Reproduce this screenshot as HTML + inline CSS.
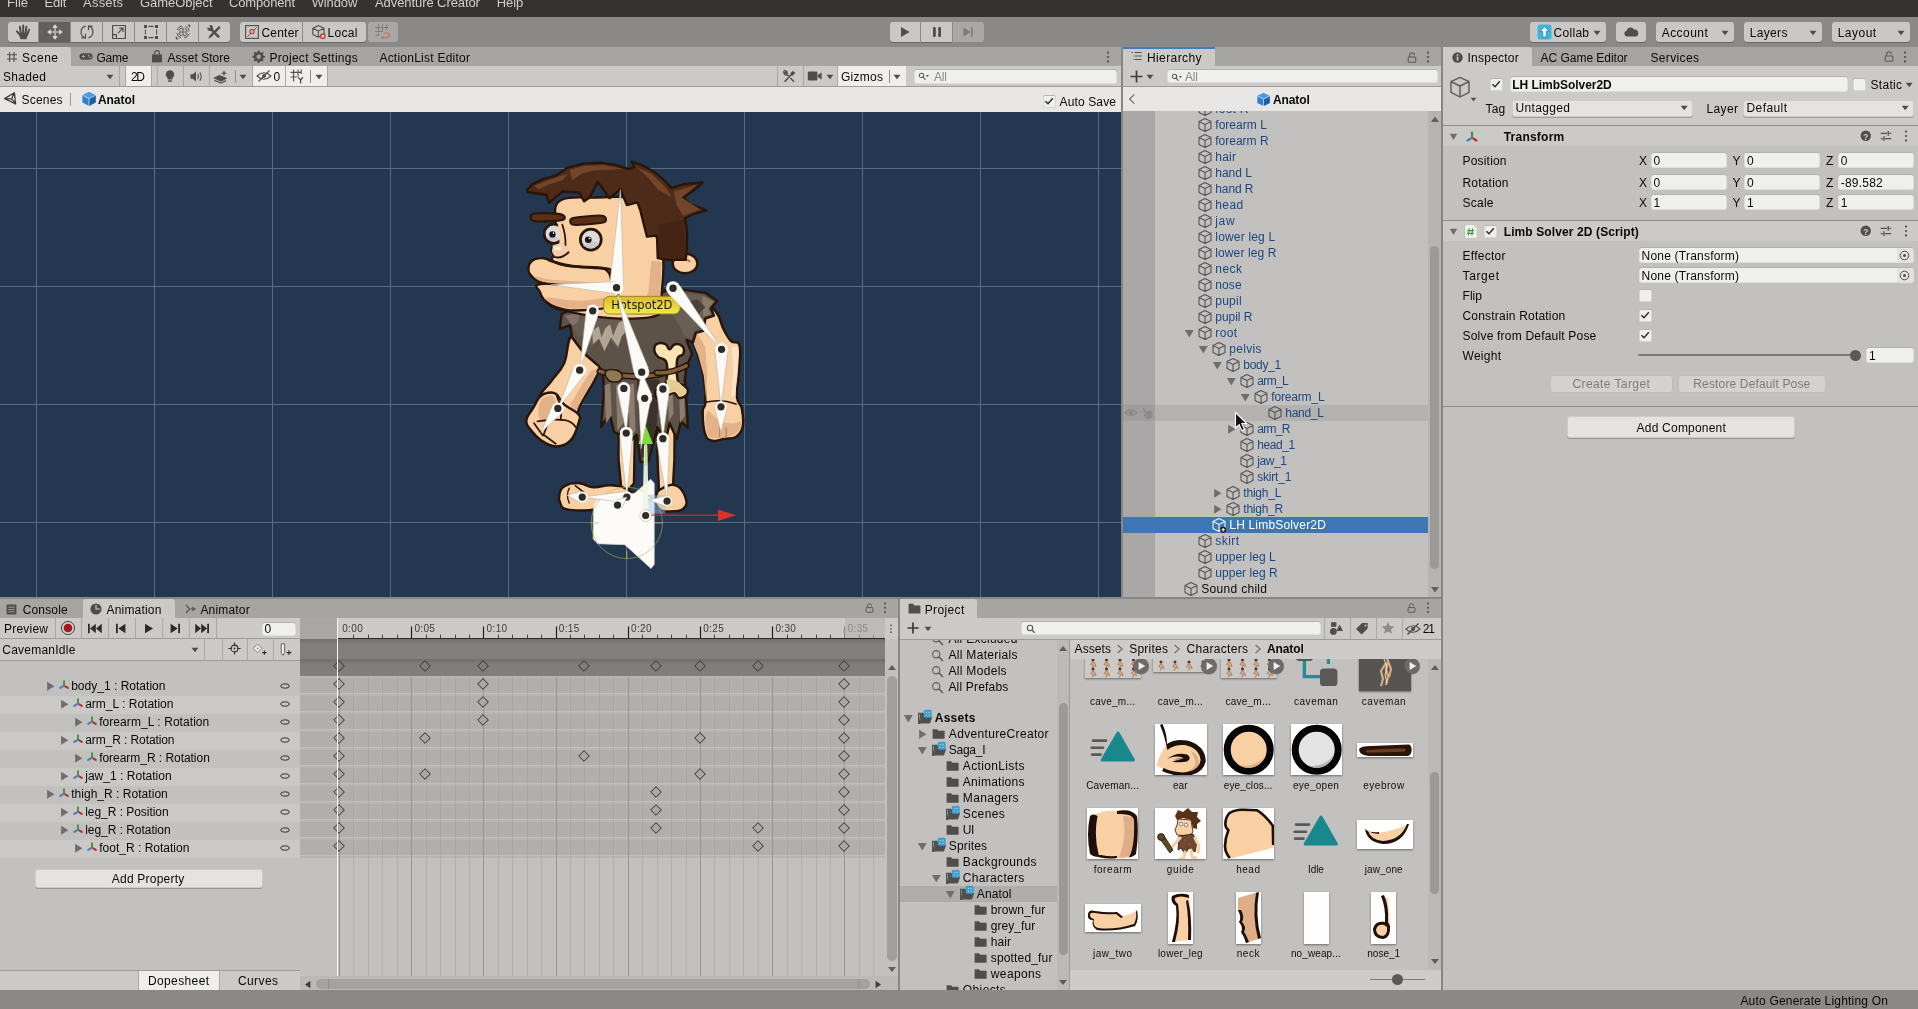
<!DOCTYPE html>
<html><head><meta charset="utf-8"><title>Unity - Anatol</title>
<style>
html,body{margin:0;padding:0}
body{width:1918px;height:1009px;overflow:hidden;position:relative;background:#878684;font-family:"Liberation Sans",sans-serif;font-size:12px;color:#090909}
div,span,svg{position:absolute;box-sizing:border-box}
.t{white-space:nowrap;line-height:16px;height:16px}
.btn{background:#c9c8c6;border-radius:3px}
.fld{background:#efefed;border-radius:3px;box-shadow:inset 0 0 0 1px rgba(0,0,0,0.07), inset 0 1px 0 0 rgba(0,0,0,0.2)}
.pbtn{background:#e4e3e1;border-radius:3px;box-shadow:inset 0 0 0 1px rgba(0,0,0,0.1), 0 1px 0 rgba(0,0,0,0.22)}
.cb{background:#efefed;border-radius:2px;box-shadow:inset 0 0 0 1px rgba(0,0,0,0.1), inset 0 1px 0 rgba(0,0,0,0.15)}
.clip{overflow:hidden}
</style></head><body>
<div id="root" style="left:0;top:0;width:1918px;height:1009px;will-change:transform">
<svg width="0" height="0" style="left:0;top:0"><defs>
<symbol id="cube" viewBox="0 0 16 16"><path d="M8 1.6 L14 4.6 V11.4 L8 14.4 L2 11.4 V4.6 Z M2 4.6 L8 7.6 L14 4.6 M8 7.6 V14.4" fill="none" stroke="#555452" stroke-width="1.1" stroke-linejoin="round"/></symbol>
<symbol id="pcube" viewBox="0 0 16 16"><path d="M8 1 L14.6 4.2 V11.6 L8 15 L1.4 11.6 V4.2 Z" fill="#2f7fd0"/><path d="M8 1 L14.6 4.2 L8 7.6 L1.4 4.2 Z" fill="#4a9be8"/><path d="M8 7.6 L14.6 4.2 V11.6 L8 15 Z" fill="#1d5fa8"/><path d="M1.4 4.2 L8 7.6 L14.6 4.2 M8 7.6 V15" fill="none" stroke="#e8f1fb" stroke-width="0.7"/></symbol>
<symbol id="fold" viewBox="0 0 16 16"><path d="M1.6 3.2 H6 L7.4 4.8 H13.6 V12.8 H1.6 Z" fill="#4f4e4c"/></symbol>
<symbol id="foldb" viewBox="0 0 16 16"><path d="M1.5 4 H5.5 L6.8 5.4 H11 V7 H4.5 L2.6 12.2 V5 H1.5Z M1.5 4 V13.5 H11.8 L13.8 7.6 H4.8 L2.8 13" fill="#4f4e4c"/><path d="M1.5 4 H5.6 L6.9 5.4 H11.5 V7.4 H4.6 L2.6 13.5 H1.5 Z" fill="none" stroke="#4f4e4c" stroke-width="1"/><path d="M3 13.5 L4.9 7.8 H14.2 L12.2 13.5 Z" fill="#4f4e4c"/><rect x="6.4" y="0.8" width="7.4" height="7.4" rx="1.4" fill="#3c9fcf"/><circle cx="8.8" cy="3.2" r="0.55" fill="#bfe4f5"/><circle cx="11.4" cy="3.2" r="0.55" fill="#bfe4f5"/><circle cx="8.8" cy="5.8" r="0.55" fill="#bfe4f5"/><circle cx="11.4" cy="5.8" r="0.55" fill="#bfe4f5"/></symbol>
<symbol id="td" viewBox="0 0 10 10"><path d="M0.8 2 H9.2 L5 9 Z" fill="#6f6e6c"/></symbol>
<symbol id="tr" viewBox="0 0 10 10"><path d="M2 0.8 V9.2 L9 5 Z" fill="#6f6e6c"/></symbol>
<symbol id="dd" viewBox="0 0 8 6"><path d="M0.5 0.8 H7.5 L4 5.2 Z" fill="#4f4e4c"/></symbol>
<symbol id="xf" viewBox="0 0 14 14"><path d="M7 6.6 V2.6" stroke="#3f9a3a" stroke-width="2.3" stroke-linecap="round"/><path d="M5.6 8.6 L2.6 10.4" stroke="#3c7fd0" stroke-width="2.3" stroke-linecap="round"/><path d="M8.4 8.6 L11.4 10.4" stroke="#c22a22" stroke-width="2.3" stroke-linecap="round"/><circle cx="7" cy="7.8" r="1" fill="#6a6968"/></symbol>
<symbol id="srch" viewBox="0 0 14 14"><circle cx="5.6" cy="5.6" r="3.9" fill="none" stroke="#5c5b59" stroke-width="1.2"/><path d="M8.6 8.6 L12.4 12.4" stroke="#5c5b59" stroke-width="1.7" stroke-linecap="round"/></symbol>
<symbol id="ssrch" viewBox="0 0 14 10"><circle cx="4" cy="4" r="2.6" fill="none" stroke="#5c5b59" stroke-width="1.2"/><path d="M6 6 L8.4 8.6" stroke="#5c5b59" stroke-width="1.4" stroke-linecap="round"/><path d="M9 3.6 H13 L11 6 Z" fill="#5c5b59"/></symbol>
<symbol id="lock" viewBox="0 0 10 11"><path d="M2.6 5 V3.2 A2.4 2.4 0 0 1 7.4 3.2" fill="none" stroke="#5c5b59" stroke-width="1.1"/><rect x="1.2" y="5" width="7.6" height="5.2" rx="0.8" fill="none" stroke="#5c5b59" stroke-width="1.1"/></symbol>
<symbol id="keb" viewBox="0 0 4 12"><circle cx="2" cy="1.6" r="1.1" fill="#4f4e4c"/><circle cx="2" cy="6" r="1.1" fill="#4f4e4c"/><circle cx="2" cy="10.4" r="1.1" fill="#4f4e4c"/></symbol>
<symbol id="chk" viewBox="0 0 12 12"><path d="M2.4 6.2 L5 8.8 L9.8 3.2" fill="none" stroke="#2b2a29" stroke-width="1.4"/></symbol>
<symbol id="key" viewBox="0 0 12 12"><path d="M6 0.7 L11.3 6 L6 11.3 L0.7 6 Z" fill="#a9a8a6" stroke="#2e2d2c" stroke-width="1"/></symbol>
<symbol id="keyd" viewBox="0 0 12 12"><path d="M6 0.7 L11.3 6 L6 11.3 L0.7 6 Z" fill="#7e7d7b" stroke="#2e2d2c" stroke-width="0.9"/></symbol>
<symbol id="oval" viewBox="0 0 10 6"><ellipse cx="5" cy="3" rx="4.2" ry="2.1" fill="none" stroke="#2f2e2d" stroke-width="1"/></symbol>
<symbol id="help" viewBox="0 0 12 12"><circle cx="6" cy="6" r="5.4" fill="#4f4e4c"/></symbol>
<symbol id="preset" viewBox="0 0 12 12"><path d="M0.8 3.4 H7 M9.4 3.4 H11.2 M0.8 8.6 H2.8 M5.2 8.6 H11.2 M8.2 1 V5.8 M4 6.2 V11" stroke="#4f4e4c" stroke-width="1.3" fill="none"/></symbol>
</defs></svg>
<div style="left:0px;top:0px;width:1918px;height:17px;background:#353331;"></div>
<span class="t" style="top:-5px;left:6.9px;font-size:13px;color:#cfcecc;letter-spacing:0.08px;">File</span>
<span class="t" style="top:-5px;left:44.4px;font-size:13px;color:#cfcecc;letter-spacing:-0.17px;">Edit</span>
<span class="t" style="top:-5px;left:83.1px;font-size:13px;color:#cfcecc;letter-spacing:0.2px;">Assets</span>
<span class="t" style="top:-5px;left:140px;font-size:13px;color:#cfcecc;letter-spacing:-0.05px;">GameObject</span>
<span class="t" style="top:-5px;left:229px;font-size:13px;color:#cfcecc;letter-spacing:-0.15px;">Component</span>
<span class="t" style="top:-5px;left:311.7px;font-size:13px;color:#cfcecc;letter-spacing:-0.13px;">Window</span>
<span class="t" style="top:-5px;left:375px;font-size:13px;color:#cfcecc;letter-spacing:-0.08px;">Adventure Creator</span>
<span class="t" style="top:-5px;left:496.7px;font-size:13px;color:#cfcecc;letter-spacing:-0.05px;">Help</span>
<div style="left:0px;top:17px;width:1918px;height:30px;background:#8a8987;"></div>
<div style="left:8px;top:22px;width:30px;height:20px;background:#c9c8c6;border-radius:3px 0 0 3px;box-shadow:0 1px 0 #6a6967;"></div>
<div style="left:39px;top:22px;width:31px;height:20px;background:#62615f;border-radius:0;box-shadow:0 1px 0 #6a6967;"></div>
<div style="left:71px;top:22px;width:31px;height:20px;background:#c9c8c6;border-radius:0;box-shadow:0 1px 0 #6a6967;"></div>
<div style="left:103px;top:22px;width:31px;height:20px;background:#c9c8c6;border-radius:0;box-shadow:0 1px 0 #6a6967;"></div>
<div style="left:135px;top:22px;width:31px;height:20px;background:#c9c8c6;border-radius:0;box-shadow:0 1px 0 #6a6967;"></div>
<div style="left:167px;top:22px;width:31px;height:20px;background:#c9c8c6;border-radius:0;box-shadow:0 1px 0 #6a6967;"></div>
<div style="left:199px;top:22px;width:31px;height:20px;background:#c9c8c6;border-radius:0 3px 3px 0;box-shadow:0 1px 0 #6a6967;"></div>
<svg style="left:15px;top:24px;" width="16" height="16" viewBox="0 0 16 16"><g stroke="#4f4e4c" stroke-width="2" stroke-linecap="round" fill="none"><path d="M5.9 10 L4.9 2.8"/><path d="M8.2 10 V1.6"/><path d="M10.4 10 L11.4 2.8"/><path d="M12.2 10.6 L14 5.8"/><path d="M5.6 11.6 L1.9 7.4"/></g><path d="M4.6 8.4 H12.9 L12.7 11 L11.5 15.2 H5.6 L4.2 11.6 Z" fill="#4f4e4c"/></svg>
<svg style="left:46.5px;top:24px;" width="16" height="16" viewBox="0 0 16 16"><path d="M8 2.6 V13.4 M2.6 8 H13.4" stroke="#b9b8b6" stroke-width="1.7"/><path d="M8 0.2 L10.8 3.8 H5.2 Z M8 15.8 L10.8 12.2 H5.2 Z M0.2 8 L3.8 5.2 V10.8 Z M15.8 8 L12.2 5.2 V10.8 Z" fill="#dddcda"/></svg>
<svg style="left:78.5px;top:24px;" width="16" height="16" viewBox="0 0 16 16"><path d="M6.4 13.8 A6 6 0 0 1 6.6 2.2 M9.6 2.2 A6 6 0 0 1 9.4 13.8" fill="none" stroke="#4f4e4c" stroke-width="1.2"/><path d="M2.4 13.9 H6.5 V9.8 M13.6 2.1 H9.5 V6.2" fill="none" stroke="#4f4e4c" stroke-width="1.2"/></svg>
<svg style="left:110.5px;top:24px;" width="16" height="16" viewBox="0 0 16 16"><path d="M1.6 1.5 H14.4 V14.5 H1.6 Z" fill="none" stroke="#4f4e4c" stroke-width="1.2"/><path d="M1.6 10.6 H5.4 V14.5" fill="none" stroke="#4f4e4c" stroke-width="1.1"/><path d="M7 9.2 L11.8 4.4 M8.2 4.2 H12 V8" fill="none" stroke="#4f4e4c" stroke-width="1.2"/></svg>
<svg style="left:142.5px;top:24px;" width="16" height="16" viewBox="0 0 16 16"><path d="M5.4 2.4 H10.6 M5.4 13.6 H10.6 M2.4 5.4 V10.6 M13.6 5.4 V10.6" fill="none" stroke="#4f4e4c" stroke-width="1.1"/><g fill="#4f4e4c"><rect x="1" y="1" width="3" height="3"/><rect x="12" y="1" width="3" height="3"/><rect x="1" y="12" width="3" height="3"/><rect x="12" y="12" width="3" height="3"/></g></svg>
<svg style="left:174.5px;top:24px;" width="16" height="16" viewBox="0 0 16 16"><circle cx="8" cy="8" r="6.2" fill="none" stroke="#4f4e4c" stroke-width="1" stroke-dasharray="6.3 3.44" stroke-dashoffset="-1.72"/><circle cx="8" cy="8" r="4.2" fill="none" stroke="#4f4e4c" stroke-width="1" stroke-dasharray="4.2 2.4" stroke-dashoffset="-1.2"/><path d="M8 3.6 L9.4 5.5 H8.55 V7.45 H10.5 V6.6 L12.4 8 L10.5 9.4 V8.55 H8.55 V10.5 H9.4 L8 12.4 L6.6 10.5 H7.45 V8.55 H5.5 V9.4 L3.6 8 L5.5 6.6 V7.45 H7.45 V5.5 H6.6 Z" fill="#6d6c6a"/><path d="M12.2 0.8 H15.2 V3.8 Z M0.8 12.2 V15.2 H3.8 Z" fill="#4f4e4c"/></svg>
<svg style="left:206px;top:24px;" width="16" height="16" viewBox="0 0 16 16"><path d="M12.9 1.9 L14.7 3.7 L5.2 13.2 L2.2 14.6 L3.5 11.5 Z" fill="#4f4e4c"/><path d="M4.8 4.8 L13.2 13.4" stroke="#4f4e4c" stroke-width="2.5"/><circle cx="4.2" cy="4" r="2.9" fill="#4f4e4c"/><path d="M4.2 4 L0.6 3.2 L3.4 0.2 Z" fill="#c9c8c6"/><path d="M5.2 13.2 L12.9 5.5" stroke="#c9c8c6" stroke-width="0.01"/></svg>
<div style="left:240px;top:22px;width:62px;height:20px;background:#c9c8c6;border-radius:3px 0 0 3px;box-shadow:0 1px 0 #6a6967;"></div>
<div style="left:303px;top:22px;width:63px;height:20px;background:#c9c8c6;border-radius:0 3px 3px 0;box-shadow:0 1px 0 #6a6967;"></div>
<svg style="left:245px;top:25px;" width="14" height="14" viewBox="0 0 14 14"><rect x="0.6" y="0.6" width="12.8" height="12.8" fill="none" stroke="#4f4e4c" stroke-width="1.1"/><path d="M2.6 11.6 L11.6 2.4" stroke="#4f4e4c" stroke-width="0.9"/><circle cx="7" cy="6.6" r="2.1" fill="#d9b8b4" stroke="#c2352b" stroke-width="1.1"/></svg>
<span class="t" style="top:25px;left:261.5px;letter-spacing:0.2px;">Center</span>
<svg style="left:311px;top:24px;" width="16" height="16" viewBox="0 0 16 16"><path d="M7.4 1.4 L13 4.2 V10.4 L7.4 13.2 L1.8 10.4 V4.2 Z M1.8 4.2 L7.4 7 L13 4.2 M7.4 7 V13.2" fill="none" stroke="#4f4e4c" stroke-width="1.1" stroke-linejoin="round"/><circle cx="11.8" cy="12.2" r="2.3" fill="#dcbab6" stroke="#c2352b" stroke-width="1.1"/></svg>
<span class="t" style="top:25px;left:327.5px;letter-spacing:0.33px;">Local</span>
<div style="left:368px;top:22px;width:30px;height:20px;background:#a9a8a6;border-radius:3px;"></div>
<svg style="left:375px;top:24px;" width="16" height="16" viewBox="0 0 16 16"><path d="M3.5 0.5 V12 M7.5 0.5 V7.5 M11.5 0.5 V5.5 M0.5 3.5 H13 M0.5 7.5 H7.5 M0.5 11.5 H4" fill="none" stroke="#757472" stroke-width="1.1" stroke-dasharray="2 0.9"/><path d="M9 9 H12 A2.3 2.3 0 0 1 12 13.6 H9" fill="none" stroke="#c77a72" stroke-width="1.7"/><rect x="6.6" y="12.4" width="2" height="2" fill="#7b7a78"/></svg>
<div style="left:890px;top:22px;width:30px;height:20px;background:#c9c8c6;border-radius:3px 0 0 3px;box-shadow:0 1px 0 #6a6967;"></div>
<div style="left:921px;top:22px;width:31px;height:20px;background:#c9c8c6;box-shadow:0 1px 0 #6a6967;"></div>
<div style="left:953px;top:22px;width:31px;height:20px;background:#a9a8a6;border-radius:0 3px 3px 0;"></div>
<svg style="left:899px;top:26px;" width="12" height="12" viewBox="0 0 12 12"><path d="M2 1 V11 L10.6 6 Z" fill="#4f4e4c"/></svg>
<svg style="left:931px;top:26px;" width="12" height="12" viewBox="0 0 12 12"><rect x="2" y="1" width="2.8" height="10" rx="1" fill="#4f4e4c"/><rect x="7.2" y="1" width="2.8" height="10" rx="1" fill="#4f4e4c"/></svg>
<svg style="left:962px;top:26px;" width="12" height="12" viewBox="0 0 12 12"><path d="M1.4 1.2 V10.8 L8.4 6 Z" fill="#7c7b79"/><rect x="9" y="1.2" width="1.6" height="9.6" fill="#7c7b79"/></svg>
<div style="left:1530px;top:22px;width:76px;height:20px;background:#c9c8c6;border-radius:3px;box-shadow:0 1px 0 #6a6967;"></div>
<svg style="left:1537px;top:24px;" width="15" height="16" viewBox="0 0 15 16"><rect x="0.5" y="0.5" width="14" height="15" rx="2.5" fill="#3fb6da"/><path d="M7.5 2.6 L12 7.4 H9.3 V13 H5.7 V7.4 H3 Z" fill="#f4fbfd" stroke="#1d6f9e" stroke-width="0.7"/></svg>
<span class="t" style="top:25px;left:1553.6px;letter-spacing:0.28px;">Collab</span>
<svg style="left:1593px;top:29.5px;" width="8" height="6"><use href="#dd"/></svg>
<div style="left:1616px;top:22px;width:30px;height:20px;background:#c9c8c6;border-radius:3px;box-shadow:0 1px 0 #6a6967;"></div>
<svg style="left:1623px;top:26px;" width="16" height="12" viewBox="0 0 16 12"><path d="M4 10.6 A3 3 0 0 1 3.6 4.7 A4 4 0 0 1 11 3.6 A3.5 3.5 0 0 1 12.4 10.6 Z" fill="#4f4e4c"/></svg>
<div style="left:1656px;top:22px;width:78px;height:20px;background:#c9c8c6;border-radius:3px;box-shadow:0 1px 0 #6a6967;"></div>
<span class="t" style="top:25px;left:1661.7px;letter-spacing:0.46px;">Account</span>
<svg style="left:1721px;top:29.5px;" width="8" height="6"><use href="#dd"/></svg>
<div style="left:1744px;top:22px;width:78px;height:20px;background:#c9c8c6;border-radius:3px;box-shadow:0 1px 0 #6a6967;"></div>
<span class="t" style="top:25px;left:1749.7px;letter-spacing:0.34px;">Layers</span>
<svg style="left:1809px;top:29.5px;" width="8" height="6"><use href="#dd"/></svg>
<div style="left:1832px;top:22px;width:78px;height:20px;background:#c9c8c6;border-radius:3px;box-shadow:0 1px 0 #6a6967;"></div>
<span class="t" style="top:25px;left:1837.7px;letter-spacing:0.49px;">Layout</span>
<svg style="left:1897px;top:29.5px;" width="8" height="6"><use href="#dd"/></svg>
<div style="left:0px;top:47px;width:1121px;height:19px;background:#a6a5a2;"></div>
<div style="left:0px;top:47px;width:70.5px;height:19px;background:#cbcac7;border-radius:0 3px 0 0;"></div>
<svg style="left:6px;top:50.5px;" width="12" height="12" viewBox="0 0 12 12"><path d="M3.6 1 V11 M8 1 V11 M1 3.8 H11 M1 8 H11" stroke="#4f4e4c" stroke-width="1.1" fill="none"/></svg>
<span class="t" style="top:50px;left:22px;letter-spacing:0.49px;">Scene</span>
<svg style="left:79px;top:52px;" width="14" height="9" viewBox="0 0 14 9"><rect x="0.5" y="1.2" width="13" height="6.6" rx="3.3" fill="#4f4e4c"/><path d="M3 4.5 H6 M4.5 3 V6" stroke="#a6a5a2" stroke-width="0.9"/><circle cx="9.6" cy="3.6" r="0.8" fill="#a6a5a2"/><circle cx="11" cy="5.4" r="0.8" fill="#a6a5a2"/></svg>
<span class="t" style="top:50px;left:96.5px;letter-spacing:-0.23px;">Game</span>
<svg style="left:151px;top:50px;" width="12" height="13" viewBox="0 0 12 13"><path d="M1 4.4 H11 V12.4 H1 Z" fill="#4f4e4c"/><path d="M3.6 4.4 V3 A2.4 2.4 0 0 1 8.4 3 V4.4" fill="none" stroke="#4f4e4c" stroke-width="1.1"/></svg>
<span class="t" style="top:50px;left:167.5px;letter-spacing:0.05px;">Asset Store</span>
<svg style="left:252px;top:50px;" width="13" height="13" viewBox="0 0 13 13"><path d="M6.5 0.6 L7.6 0.6 L8 2.2 L9.4 2.8 L10.8 1.9 L11.8 2.9 L10.9 4.3 L11.5 5.7 L13 6 V7.4 L11.5 7.8 L10.9 9.2 L11.7 10.6 L10.7 11.6 L9.3 10.8 L7.9 11.4 L7.5 13 H5.9 L5.5 11.4 L4.1 10.8 L2.7 11.6 L1.7 10.6 L2.5 9.2 L1.9 7.8 L0.4 7.4 V6 L1.9 5.6 L2.5 4.2 L1.7 2.8 L2.7 1.8 L4.1 2.6 L5.5 2.1 L5.9 0.6 Z" fill="#4f4e4c"/><circle cx="6.7" cy="6.7" r="2.2" fill="#a6a5a2"/></svg>
<span class="t" style="top:50px;left:269.4px;letter-spacing:0.29px;">Project Settings</span>
<span class="t" style="top:50px;left:379.4px;letter-spacing:0.24px;">ActionList Editor</span>
<svg style="left:1105.5px;top:51px;" width="4" height="12"><use href="#keb"/></svg>
<div style="left:0px;top:66px;width:1121px;height:21px;background:#cbcac7;"></div>
<div style="left:0px;top:86px;width:1121px;height:1px;background:#9d9c9a;"></div>
<span class="t" style="top:69px;left:3px;letter-spacing:0.33px;">Shaded</span>
<svg style="left:106px;top:74px;" width="8" height="6"><use href="#dd"/></svg>
<div style="left:118.5px;top:66px;width:1px;height:20px;background:#a9a8a6;"></div>
<div style="left:125px;top:66px;width:1px;height:20px;background:#a9a8a6;"></div>
<div style="left:126px;top:66px;width:25px;height:20px;background:#efeeec;"></div>
<span class="t" style="top:69px;left:131px;letter-spacing:-1.34px;font-weight:normal;">2D</span>
<div style="left:151px;top:66px;width:1px;height:20px;background:#a9a8a6;"></div>
<div style="left:157px;top:66px;width:1px;height:20px;background:#a9a8a6;"></div>
<div style="left:183px;top:66px;width:1px;height:20px;background:#a9a8a6;"></div>
<div style="left:209px;top:66px;width:1px;height:20px;background:#a9a8a6;"></div>
<div style="left:251.5px;top:66px;width:1px;height:20px;background:#a9a8a6;"></div>
<div style="left:285px;top:66px;width:1px;height:20px;background:#a9a8a6;"></div>
<div style="left:327px;top:66px;width:1px;height:20px;background:#a9a8a6;"></div>
<svg style="left:163px;top:69px;" width="14" height="15" viewBox="0 0 14 15"><path d="M7 1.2 A4.2 4.2 0 0 1 9.4 8.8 V10.4 H4.6 V8.8 A4.2 4.2 0 0 1 7 1.2 Z" fill="#4f4e4c"/><rect x="5" y="11.2" width="4" height="1.6" rx="0.6" fill="#4f4e4c"/></svg>
<svg style="left:189px;top:69px;" width="15" height="15" viewBox="0 0 15 15"><path d="M1.5 5.2 H3.8 L7 2.4 V12.6 L3.8 9.8 H1.5 Z" fill="#4f4e4c"/><path d="M8.8 4.8 Q10.4 7.5 8.8 10.2 M10.8 3.2 Q13.4 7.5 10.8 11.8" fill="none" stroke="#4f4e4c" stroke-width="1.1"/></svg>
<svg style="left:213px;top:69px;" width="16" height="15" viewBox="0 0 16 15"><path d="M1.5 9 L6.5 6.6 L13 9.4 L8 12 Z M1.5 11.4 L8 14.2 L13 11.6" fill="none" stroke="#4f4e4c" stroke-width="1.2"/><path d="M1.5 9 L6.5 6.6 L13 9.4 L8 12 Z" fill="#4f4e4c"/><path d="M11 1 L11.8 3.4 L14.2 4.2 L11.8 5 L11 7.4 L10.2 5 L7.8 4.2 L10.2 3.4 Z" fill="#4f4e4c"/></svg>
<div style="left:234.5px;top:70px;width:1px;height:13px;background:#8f8e8c;"></div>
<svg style="left:239px;top:74px;" width="8" height="6"><use href="#dd"/></svg>
<div style="left:252.5px;top:66px;width:32.5px;height:20px;background:#efeeec;"></div>
<svg style="left:256px;top:70px;" width="16" height="12" viewBox="0 0 16 12"><path d="M1 6 Q8 -0.5 15 6 Q8 12.5 1 6 Z" fill="none" stroke="#4f4e4c" stroke-width="1.1"/><circle cx="8" cy="6" r="2" fill="#4f4e4c"/><path d="M2.5 11.5 L13.5 0.5" stroke="#4f4e4c" stroke-width="1.3"/></svg>
<span class="t" style="top:69px;left:273.5px;letter-spacing:0.33px;">0</span>
<div style="left:286px;top:66px;width:41px;height:20px;background:#efeeec;"></div>
<svg style="left:290px;top:69px;" width="16" height="15" viewBox="0 0 16 15"><path d="M3.6 0.6 V12.4 M8 0.6 V7.4 M0.6 3.4 H11.6 M0.6 8 H7 M11.2 0.6 V5" stroke="#4f4e4c" stroke-width="1.1" fill="none"/><path d="M8.2 8.2 L10.6 11.2 L13 8.2 M10.6 11.2 V14.4" stroke="#4f4e4c" stroke-width="1.3" fill="none"/></svg>
<div style="left:310px;top:70px;width:1px;height:13px;background:#8f8e8c;"></div>
<svg style="left:315px;top:74px;" width="8" height="6"><use href="#dd"/></svg>
<div style="left:777px;top:66px;width:1px;height:20px;background:#a9a8a6;"></div>
<div style="left:802.5px;top:66px;width:1px;height:20px;background:#a9a8a6;"></div>
<div style="left:837px;top:66px;width:1px;height:20px;background:#a9a8a6;"></div>
<svg style="left:782px;top:69px;" width="15" height="15" viewBox="0 0 15 15"><path d="M2.6 12.8 L9.6 5.2 M11.6 2.4 L9.2 4.8 L10.2 5.8 L12.8 3.4" fill="none" stroke="#4f4e4c" stroke-width="1.6"/><path d="M12 12.8 L8.4 9 M6.6 7 L5 5.4 Q5.8 3.2 4 2 L3 1.6 L4 3.2 L3.2 4.2 L1.8 3.2 Q1.8 5.2 3.6 6 L4.8 5.8" fill="none" stroke="#4f4e4c" stroke-width="1.4"/></svg>
<svg style="left:807px;top:70px;" width="16" height="12" viewBox="0 0 16 12"><rect x="0.8" y="1.4" width="9.6" height="9" rx="1.2" fill="#4f4e4c"/><path d="M10.8 5 L14.6 2.4 V9.6 L10.8 7 Z" fill="#4f4e4c"/></svg>
<svg style="left:826px;top:74px;" width="8" height="6"><use href="#dd"/></svg>
<div style="left:838px;top:66px;width:67.5px;height:20px;background:#efeeec;"></div>
<span class="t" style="top:69px;left:841px;letter-spacing:0.27px;">Gizmos</span>
<div style="left:888.5px;top:70px;width:1px;height:13px;background:#8f8e8c;"></div>
<svg style="left:893px;top:74px;" width="8" height="6"><use href="#dd"/></svg>
<div class="fld" style="left:913.5px;top:68.5px;width:203.5px;height:15px;"></div>
<svg style="left:918px;top:72px;" width="12" height="8.5"><use href="#ssrch"/></svg>
<span class="t" style="top:69px;left:934px;color:#8b8a88;letter-spacing:-0.17px;">All</span>
<div style="left:0px;top:87px;width:1121px;height:25px;background:#e8e7e5;"></div>
<svg style="left:3px;top:91px;" width="16" height="16" viewBox="0 0 16 16"><path d="M1.6 7.6 L11.4 1.8 L12.6 13 Z M1.6 7.6 L8.6 7.8 M8.6 7.8 L11.4 1.8 M8.6 7.8 L12.6 13" fill="none" stroke="#3d3c3b" stroke-width="1.3" stroke-linejoin="round"/></svg>
<span class="t" style="top:92px;left:21.5px;letter-spacing:0.2px;">Scenes</span>
<div style="left:70px;top:93px;width:1px;height:13px;background:#9a9997;"></div>
<svg style="left:80.5px;top:91px;" width="16" height="16"><use href="#pcube"/></svg>
<span class="t" style="top:92px;left:98px;font-weight:bold;letter-spacing:-0.07px;">Anatol</span>
<div class="cb" style="left:1042.5px;top:94.5px;width:13px;height:13px;"></div>
<svg style="left:1043px;top:95px;" width="12" height="12"><use href="#chk"/></svg>
<span class="t" style="top:94px;left:1059.5px;letter-spacing:0.14px;">Auto Save</span>
<div class="clip" style="left:0px;top:112px;width:1121px;height:485px;background:#233751;"><svg style="left:0;top:0" width="1121" height="485"><path d="M36.5 0 V485" stroke="#596a80" stroke-width="1"/><path d="M154.5 0 V485" stroke="#596a80" stroke-width="1"/><path d="M272.5 0 V485" stroke="#596a80" stroke-width="1"/><path d="M390.5 0 V485" stroke="#596a80" stroke-width="1"/><path d="M508.5 0 V485" stroke="#596a80" stroke-width="1"/><path d="M626.5 0 V485" stroke="#596a80" stroke-width="1"/><path d="M744.5 0 V485" stroke="#596a80" stroke-width="1"/><path d="M862.5 0 V485" stroke="#596a80" stroke-width="1"/><path d="M980.5 0 V485" stroke="#596a80" stroke-width="1"/><path d="M1098.5 0 V485" stroke="#596a80" stroke-width="1"/><path d="M0 56.5 H1121" stroke="#596a80" stroke-width="1"/><path d="M0 174.5 H1121" stroke="#596a80" stroke-width="1"/><path d="M0 292.5 H1121" stroke="#596a80" stroke-width="1"/><path d="M0 410.5 H1121" stroke="#596a80" stroke-width="1"/><g transform="translate(500,28) scale(0.19818)"><path d="M600 912 L690 912 L676 1732 L655 1757 L612 1757 L598 1612 Z" fill="#f8d0a4" stroke="#2a1509" stroke-width="12" stroke-linejoin="round"/><path d="M790 912 L885 912 L880 1612 L872 1762 L802 1762 L795 1612 Z" fill="#f8d0a4" stroke="#2a1509" stroke-width="12" stroke-linejoin="round"/><path d="M300.0 1787.0 C305.8 1766.0 306.7 1756.8 330.0 1744.0 C353.3 1731.2 367.3 1730.1 400.0 1732.0 C432.7 1733.9 432.7 1749.7 470.0 1752.0 C507.3 1754.3 520.3 1739.7 560.0 1742.0 C599.7 1744.3 609.7 1745.7 640.0 1762.0 C670.3 1778.3 690.0 1789.8 690.0 1812.0 C690.0 1834.2 679.7 1847.2 640.0 1857.0 C600.3 1866.8 564.3 1851.4 520.0 1854.0 C475.7 1856.6 492.0 1865.7 450.0 1868.0 C408.0 1870.3 373.8 1871.9 340.0 1864.0 C306.2 1856.1 314.3 1852.0 305.0 1834.0 C295.7 1816.0 294.2 1808.0 300.0 1787.0 Z" fill="#f8d0a4" stroke="#2a1509" stroke-width="12" stroke-linejoin="round"/><path d="M380 1744 L425 1780 L405 1812" fill="none" stroke="#2a1509" stroke-width="8" stroke-linecap="round"/><path d="M350 1757 Q330 1792 350 1832" fill="none" stroke="#2a1509" stroke-width="7" stroke-linecap="round"/><path d="M820.0 1757.0 C843.8 1744.6 863.2 1733.5 890.0 1744.0 C916.8 1754.5 926.1 1775.6 935.0 1802.0 C943.9 1828.4 945.5 1840.2 928.0 1857.0 C910.5 1873.8 889.9 1873.8 860.0 1874.0 C830.1 1874.2 816.8 1876.0 800.0 1858.0 C783.2 1840.0 783.3 1820.6 788.0 1797.0 C792.7 1773.4 796.2 1769.4 820.0 1757.0 Z" fill="#f8d0a4" stroke="#2a1509" stroke-width="12" stroke-linejoin="round"/><g transform="translate(75.69,756.9) scale(0.96041)"><path d="M905.0 190.0 C921.0 159.0 969.0 104.0 1000.0 90.0 C1031.0 76.0 1041.0 97.0 1060.0 120.0 C1079.0 143.0 1080.0 175.4 1095.0 205.0 C1110.0 234.6 1118.0 250.6 1135.0 268.0 C1152.0 285.4 1171.4 261.6 1180.0 292.0 C1188.6 322.4 1180.8 366.4 1178.0 420.0 C1175.2 473.6 1163.2 519.0 1166.0 560.0 C1168.8 601.0 1186.0 593.0 1192.0 625.0 C1198.0 657.0 1202.4 690.6 1196.0 720.0 C1189.6 749.4 1179.2 759.6 1160.0 772.0 C1140.8 784.4 1124.0 778.0 1100.0 782.0 C1076.0 786.0 1060.0 796.4 1040.0 792.0 C1020.0 787.6 1010.8 790.4 1000.0 760.0 C989.2 729.6 986.0 674.0 986.0 640.0 C986.0 606.0 999.2 628.0 1000.0 590.0 C1000.8 552.0 998.0 500.0 990.0 450.0 C982.0 400.0 974.0 381.0 960.0 340.0 C946.0 299.0 931.0 275.0 920.0 245.0 C909.0 215.0 889.0 221.0 905.0 190.0 Z" fill="#f8d0a4" stroke="#2a1509" stroke-width="13" stroke-linejoin="round"/><path d="M1140 300 L1172 300 L1168 420 L1158 560 L1135 560 L1148 420 Z" fill="#fde3c6"/><path d="M925 250 L960 230 L1000 300 L1010 440 L1005 580 L992 450 L962 342 Z" fill="#e3b289"/><path d="M1010.0 640.0 C1024.0 628.0 1052.0 678.0 1080.0 690.0 C1108.0 702.0 1129.0 700.0 1150.0 700.0 C1171.0 700.0 1178.0 686.0 1185.0 690.0 C1192.0 694.0 1192.0 706.0 1185.0 720.0 C1178.0 734.0 1177.0 748.4 1150.0 760.0 C1123.0 771.6 1078.0 780.0 1050.0 778.0 C1022.0 776.0 1018.0 777.6 1010.0 750.0 C1002.0 722.4 996.0 652.0 1010.0 640.0 Z" fill="#e3b289"/><path d="M1000 590 Q1080 570 1165 600" fill="none" stroke="#2a1509" stroke-width="8"/><path d="M1075 720 V770 M1110 725 V775" fill="none" stroke="#b9835f" stroke-width="7" stroke-linecap="round"/><path d="M300.0 240.0 C328.4 229.0 370.8 298.4 400.0 330.0 C429.2 361.6 442.0 370.0 446.0 398.0 C450.0 426.0 440.2 429.6 420.0 470.0 C399.8 510.4 369.0 554.0 345.0 600.0 C321.0 646.0 329.0 688.0 300.0 700.0 C271.0 712.0 234.0 686.0 200.0 660.0 C166.0 634.0 132.0 606.0 130.0 570.0 C128.0 534.0 164.4 517.0 190.0 480.0 C215.6 443.0 236.0 433.0 258.0 385.0 C280.0 337.0 271.6 251.0 300.0 240.0 Z" fill="#f8d0a4" stroke="#2a1509" stroke-width="13" stroke-linejoin="round"/><path d="M395 430 L435 410 L412 470 L340 598 L310 650 L290 600 Z" fill="#e3b289"/><path d="M245 125 L300 100 L420 90 L560 60 L700 40 L830 -10 L1000 15 L1062 58 L1030 95 L1045 135 L1000 150 L990 215 L950 225 L935 275 L900 262 L930 335 L902 400 L892 470 L902 600 L908 725 L872 690 L850 782 L812 700 L790 800 L748 720 L700 900 L660 905 L640 760 L600 800 L585 720 L545 760 L520 745 L498 650 L452 720 L468 520 L462 440 L440 400 L362 332 L300 250 L290 185 L236 205 Z" fill="#5d5248" stroke="#2a1509" stroke-width="13" stroke-linejoin="round"/><path d="M262 135 L420 105 L560 80 L570 140 L600 200 L560 250 L540 310 L500 260 L470 330 L440 260 L400 300 L380 230 L330 250 L300 190 Z" fill="#675c52"/><path d="M405 215 L440 190 L455 250 L475 200 L500 180 L515 240 L545 170 L575 160 L590 205 L560 245 L542 300 L505 250 L470 320 L442 255 L410 285 Z" fill="#b3a595"/><path d="M262 135 L340 120 L330 170 L300 185 Z" fill="#80736a"/><path d="M840 10 L995 30 L1045 62 L1015 98 L1030 128 L990 140 L980 205 L945 212 L925 262 L890 240 L860 180 L820 120 L800 60 Z" fill="#6a5f55"/><path d="M985 30 L1045 62 L1015 98 L1030 128 L990 140 L985 100 Z" fill="#85786c"/><path d="M905 60 L960 50 L1000 90 L960 130 L920 120 Z" fill="#4a4039"/><path d="M470 500 L500 490 L508 660 L478 700 Z" fill="#8c7d6e"/><path d="M530 500 L560 490 L568 700 L538 740 Z" fill="#8c7d6e"/><path d="M595 500 L625 490 L633 740 L603 780 Z" fill="#8c7d6e"/><path d="M800 500 L825 490 L833 650 L808 690 Z" fill="#8c7d6e"/><path d="M860 500 L885 490 L893 660 L868 700 Z" fill="#8c7d6e"/><path d="M640 470 L760 470 L745 700 L700 880 L665 880 L650 700 Z" fill="#3b322c"/><path d="M445 428 Q560 462 700 452 Q820 440 900 398" fill="none" stroke="#2a1509" stroke-width="34" stroke-linecap="round"/><path d="M445 428 Q560 462 700 452 Q820 440 900 398" fill="none" stroke="#80603f" stroke-width="18" stroke-linecap="round"/><path d="M480.0 425.0 C491.7 415.7 511.3 416.5 530.0 420.0 C548.7 423.5 554.2 427.2 560.0 440.0 C565.8 452.8 566.7 465.2 555.0 475.0 C543.3 484.8 527.5 485.5 510.0 482.0 C492.5 478.5 487.0 473.3 480.0 460.0 C473.0 446.7 468.3 434.3 480.0 425.0 Z" fill="#8d7a55" stroke="#2a1509" stroke-width="8"/><path d="M732.0 318.0 C730.6 304.4 733.4 290.8 745.0 284.0 C756.6 277.2 776.6 278.4 790.0 284.0 C803.4 289.6 802.4 311.6 812.0 312.0 C821.6 312.4 824.4 289.2 838.0 286.0 C851.6 282.8 870.8 286.0 880.0 296.0 C889.2 306.0 889.6 322.0 884.0 336.0 C878.4 350.0 857.6 337.2 852.0 366.0 C846.4 394.8 849.6 453.2 856.0 480.0 C862.4 506.8 873.6 491.2 884.0 500.0 C894.4 508.8 905.6 512.8 908.0 524.0 C910.4 535.2 905.6 547.6 896.0 556.0 C886.4 564.4 871.6 568.8 860.0 566.0 C848.4 563.2 850.0 544.0 838.0 542.0 C826.0 540.0 813.6 548.0 800.0 556.0 C786.4 564.0 782.0 581.2 770.0 582.0 C758.0 582.8 744.8 572.0 740.0 560.0 C735.2 548.0 736.0 534.0 746.0 522.0 C756.0 510.0 780.0 528.0 790.0 500.0 C800.0 472.0 803.6 411.6 796.0 382.0 C788.4 352.4 764.8 364.8 752.0 352.0 C739.2 339.2 733.4 331.6 732.0 318.0 Z" fill="#f9e4b2" stroke="#2a1509" stroke-width="13" stroke-linejoin="round"/><path d="M800.0 470.0 C810.8 464.4 834.0 473.0 850.0 480.0 C866.0 487.0 870.4 495.0 880.0 505.0 C889.6 515.0 896.4 521.0 898.0 530.0 C899.6 539.0 895.2 544.8 888.0 550.0 C880.8 555.2 871.2 559.2 862.0 556.0 C852.8 552.8 854.4 535.6 842.0 534.0 C829.6 532.4 814.0 540.4 800.0 548.0 C786.0 555.6 782.0 570.4 772.0 572.0 C762.0 573.6 753.6 564.8 750.0 556.0 C746.4 547.2 744.8 537.6 754.0 528.0 C763.2 518.4 786.8 519.6 796.0 508.0 C805.2 496.4 789.2 475.6 800.0 470.0 Z" fill="#e6cc93"/><path d="M745 435 Q820 440 900 398" fill="none" stroke="#2a1509" stroke-width="34" stroke-linecap="round"/><path d="M745 435 Q820 440 900 398" fill="none" stroke="#80603f" stroke-width="18" stroke-linecap="round"/><path d="M60.0 682.0 C63.0 659.6 81.0 644.0 95.0 620.0 C109.0 596.0 114.6 578.0 130.0 562.0 C145.4 546.0 154.8 543.2 172.0 540.0 C189.2 536.8 199.2 534.0 216.0 546.0 C232.8 558.0 233.2 579.2 256.0 600.0 C278.8 620.8 314.0 631.6 330.0 650.0 C346.0 668.4 343.6 664.0 336.0 692.0 C328.4 720.0 316.0 764.0 292.0 790.0 C268.0 816.0 246.4 821.6 216.0 822.0 C185.6 822.4 167.2 810.0 140.0 792.0 C112.8 774.0 96.0 754.0 80.0 732.0 C64.0 710.0 57.0 704.4 60.0 682.0 Z" fill="#f8d0a4" stroke="#2a1509" stroke-width="13" stroke-linejoin="round"/><path d="M130.0 590.0 C138.0 566.0 155.0 565.0 170.0 560.0 C185.0 555.0 196.0 549.0 205.0 565.0 C214.0 581.0 218.0 615.0 215.0 640.0 C212.0 665.0 207.0 682.0 190.0 690.0 C173.0 698.0 142.0 700.0 130.0 680.0 C118.0 660.0 122.0 614.0 130.0 590.0 Z" fill="#e3b289"/><path d="M118 690 Q200 676 262 684 Q300 690 318 720" fill="none" stroke="#2a1509" stroke-width="9" stroke-linecap="round"/><path d="M100 700 L146 765 M178 690 L150 760 L214 808" fill="none" stroke="#2a1509" stroke-width="9" stroke-linecap="round"/><path d="M220 560 Q250 620 240 680" fill="none" stroke="#2a1509" stroke-width="9" stroke-linecap="round"/></g><g transform="translate(75.69,50.46) scale(0.80032)"><ellipse cx="1072" cy="715" rx="78" ry="62" fill="#f8d0a4" stroke="#2a1509" stroke-width="15" stroke-linejoin="round"/><path d="M985 690 Q1060 668 1105 705" fill="none" stroke="#b47a58" stroke-width="13"/><path d="M270.0 330.0 C309.7 286.7 415.0 301.7 500.0 300.0 C585.0 298.3 713.3 283.3 780.0 320.0 C846.7 356.7 874.2 456.7 900.0 520.0 C925.8 583.3 930.8 636.7 935.0 700.0 C939.2 763.3 930.8 843.3 925.0 900.0 C919.2 956.7 954.2 1013.3 900.0 1040.0 C845.8 1066.7 700.0 1065.0 600.0 1060.0 C500.0 1055.0 366.7 1026.7 300.0 1010.0 C233.3 993.3 221.7 981.7 200.0 960.0 C178.3 938.3 165.0 923.3 170.0 880.0 C175.0 836.7 214.7 753.3 230.0 700.0 C245.3 646.7 255.3 621.7 262.0 560.0 C268.7 498.3 230.3 373.3 270.0 330.0 Z" fill="#f8d0a4" stroke="#2a1509" stroke-width="15" stroke-linejoin="round"/><path d="M860 700 L925 705 L915 900 L895 1030 L760 1040 L840 900 Z" fill="#e3b289"/><path d="M160.0 845.0 C216.0 834.5 295.0 851.5 400.0 855.0 C505.0 858.5 551.7 848.3 610.0 860.0 C668.3 871.7 652.3 875.8 650.0 905.0 C647.7 934.2 653.7 960.5 600.0 985.0 C546.3 1009.5 492.3 1006.5 420.0 1010.0 C347.7 1013.5 342.5 1012.8 290.0 1000.0 C237.5 987.2 225.3 978.3 195.0 955.0 C164.7 931.7 168.2 925.7 160.0 900.0 C151.8 874.3 104.0 855.5 160.0 845.0 Z" fill="#f8d0a4" stroke="#2a1509" stroke-width="15" stroke-linejoin="round"/><path d="M200.0 930.0 C237.0 929.0 320.0 950.0 400.0 950.0 C480.0 950.0 562.0 925.0 600.0 930.0 C638.0 935.0 626.0 961.0 590.0 975.0 C554.0 989.0 479.0 997.0 420.0 1000.0 C361.0 1003.0 336.0 999.0 295.0 990.0 C254.0 981.0 234.0 967.0 215.0 955.0 C196.0 943.0 163.0 931.0 200.0 930.0 Z" fill="#e3b289"/><path d="M85.0 745.0 C86.2 724.0 87.5 714.7 105.0 700.0 C122.5 685.3 132.0 683.2 160.0 682.0 C188.0 680.8 185.3 683.8 225.0 695.0 C264.7 706.2 251.8 718.3 330.0 730.0 C408.2 741.7 495.8 734.5 560.0 745.0 C624.2 755.5 592.9 748.2 605.0 775.0 C617.1 801.8 659.8 841.3 612.0 860.0 C564.2 878.7 489.1 858.5 400.0 855.0 C310.9 851.5 288.3 850.8 230.0 845.0 C171.7 839.2 180.3 842.8 150.0 830.0 C119.7 817.2 115.2 809.8 100.0 790.0 C84.8 770.2 83.8 766.0 85.0 745.0 Z" fill="#f8d0a4" stroke="#2a1509" stroke-width="15" stroke-linejoin="round"/><path d="M130.0 800.0 C144.0 798.6 172.0 812.0 230.0 818.0 C288.0 824.0 346.0 826.6 420.0 830.0 C494.0 833.4 564.0 830.6 600.0 835.0 C636.0 839.4 640.0 849.4 600.0 852.0 C560.0 854.6 473.0 850.8 400.0 848.0 C327.0 845.2 283.0 842.6 235.0 838.0 C187.0 833.4 181.0 832.6 160.0 825.0 C139.0 817.4 116.0 801.4 130.0 800.0 Z" fill="#e3b289"/><path d="M215 695 Q300 728 420 738 Q520 742 562 748 Q600 765 608 820" fill="none" stroke="#2a1509" stroke-width="17" stroke-linecap="round"/><circle cx="244" cy="528" r="60" fill="#dcdcdf" stroke="#2a1509" stroke-width="17"/><path d="M195 555 Q236 590 275 560 Q260 540 236 548 Z" fill="#c4c4c8" opacity="0.8"/><circle cx="236" cy="532" r="20" fill="#1a1413"/><circle cx="243" cy="524" r="5" fill="#fff"/><path d="M268 440 L330 440 L350 690 L240 690 L282 600 Z" fill="#f8d0a4"/><path d="M298 470 Q322 540 318 610" fill="none" stroke="#2a1509" stroke-width="11" stroke-linecap="round"/><path d="M250.0 598.0 C225.5 607.6 226.0 619.5 226.0 640.0 C226.0 660.5 228.9 667.5 250.0 675.0 C271.1 682.5 281.5 677.3 305.0 668.0 C328.5 658.7 334.5 657.1 338.0 640.0 C341.5 622.9 341.5 615.2 318.0 604.0 C294.5 592.8 274.5 588.4 250.0 598.0 Z" fill="#f8ccab"/><path d="M232 612 Q218 645 248 674 Q290 690 338 645" fill="none" stroke="#2a1509" stroke-width="12" stroke-linecap="round"/><ellipse cx="268" cy="620" rx="24" ry="12" fill="#fdeede"/><circle cx="478" cy="565" r="66" fill="#dcdcdf" stroke="#2a1509" stroke-width="17"/><path d="M425 600 Q478 640 530 598 Q510 570 478 578 Z" fill="#c4c4c8" opacity="0.8"/><circle cx="462" cy="566" r="21" fill="#1a1413"/><circle cx="470" cy="557" r="6" fill="#fff"/><path d="M108.0 405.0 C122.7 397.2 168.3 397.5 200.0 398.0 C231.7 398.5 280.7 401.0 298.0 408.0 C315.3 415.0 320.3 433.0 304.0 440.0 C287.7 447.0 232.0 449.2 200.0 450.0 C168.0 450.8 127.3 452.5 112.0 445.0 C96.7 437.5 93.3 412.8 108.0 405.0 Z" fill="#5c3018" stroke="#2a1509" stroke-width="13" stroke-linejoin="round"/><path d="M358.0 432.0 C374.3 423.3 426.7 420.7 460.0 418.0 C493.3 415.3 540.7 409.8 558.0 416.0 C575.3 422.2 580.3 446.3 564.0 455.0 C547.7 463.7 493.7 465.5 460.0 468.0 C426.3 470.5 379.0 476.0 362.0 470.0 C345.0 464.0 341.7 440.7 358.0 432.0 Z" fill="#5c3018" stroke="#2a1509" stroke-width="13" stroke-linejoin="round"/><path d="M75 252 L110 215 L180 182 L262 160 L330 112 L430 86 L540 80 L640 95 L720 120 L752 106 L735 74 L800 95 L880 140 L940 190 L985 240 L1060 216 L1182 205 L1120 260 L1062 300 L1100 340 L1207 380 L1130 402 L1072 430 L1086 520 L1082 640 L1076 692 L960 692 L900 682 L896 560 L890 540 L832 546 L815 480 L790 380 L772 330 L705 347 L665 246 L597 304 L522 200 L470 300 L436 324 L405 268 L300 262 L215 332 L200 284 L78 265 Z" fill="#4e2b19" stroke="#2a1509" stroke-width="15" stroke-linejoin="round"/><path d="M120 225 L262 172 L335 150 L300 190 L220 215 L150 248 Z" fill="#71452a"/><path d="M345 125 L440 100 L560 96 L680 118 L600 125 L500 130 L420 150 L360 190 Z" fill="#71452a"/><path d="M770 110 L860 150 L950 235 L990 300 L900 250 L840 175 Z" fill="#71452a"/><path d="M1000 262 L1150 218 L1050 300 L1170 375 L1060 415 L1020 350 Z" fill="#71452a"/><path d="M905 470 L1065 440 L1075 680 L905 675 Z" fill="#3a1f12" opacity="0.55"/></g><path d="M472 1837 L490 1817 L680 1782 L760 1712 L778 1732 L778 2142 L762 2162 L630 2042 L492 2037 L470 2012 Z" fill="#fcfbf8" stroke="#d9d7d2" stroke-width="4" stroke-linejoin="round"/><circle cx="640" cy="1932" r="180" fill="none" stroke="#b5b540" stroke-width="3"/><path d="M640 2072 V2112 M460 1932 H500 M780 1932 H820" stroke="#c9c93a" stroke-width="4"/><rect x="742" y="1794" width="90" height="90" fill="#9fc4ee" opacity="0.45" stroke="#7fa8dc" stroke-width="4"/><path d="M719 1897 L751 1897 L743 1537 L727 1537 Z" fill="#eef7e4" opacity="0.93"/><path d="M735 1642 V1527" stroke="#a6e36a" stroke-width="7"/><path d="M698 1534 L772 1534 L735 1440 Z" fill="#7fdc36"/><path d="M735 1893 H1105" stroke="#b9392f" stroke-width="6"/><path d="M1100 1865 L1100 1923 L1192 1894 Z" fill="#d8322a"/></g><defs><linearGradient id="hg" x1="0" y1="0" x2="0" y2="1"><stop offset="0" stop-color="#dcbc22"/><stop offset="1" stop-color="#f0ea52"/></linearGradient></defs><rect x="603.6" y="184.3" width="76.6" height="17.7" rx="6" fill="url(#hg)" stroke="#8f7f1c" stroke-width="0.9"/><text x="611.2" y="196.9" font-family="DejaVu Sans, Liberation Sans, sans-serif" font-size="11.5" fill="#1c1a08">Hotspot2D</text><g transform="translate(500,28) scale(0.19818)"><path d="M733.9 1337.4 L766.3 1285.9 L715.0 1171.4 L690.7 1294.5 Z" fill="#fbfaf6" stroke="#b9b3a8" stroke-width="3" stroke-linejoin="round"/><circle cx="730.0" cy="1303.4" r="38.0" fill="#fbfaf6"/><circle cx="730.0" cy="1303.4" r="18.5" fill="#2f2b28"/><path d="M725.1 1204.1 L747.4 1147.5 L590.0 766.4 L674.8 1169.9 Z" fill="#fbfaf6" stroke="#b9b3a8" stroke-width="3" stroke-linejoin="round"/><circle cx="715.0" cy="1171.4" r="38.0" fill="#fbfaf6"/><circle cx="715.0" cy="1171.4" r="18.5" fill="#2f2b28"/><path d="M731.9 1276.5 L699.3 1311.7 L712.0 1556.4 L759.2 1316.0 Z" fill="#fbfaf6" stroke="#b9b3a8" stroke-width="3" stroke-linejoin="round"/><circle cx="730.0" cy="1303.4" r="30.0" fill="#fbfaf6"/><circle cx="730.0" cy="1303.4" r="18.5" fill="#2f2b28"/><path d="M586.7 776.5 L623.5 734.2 L608.0 250.0 L553.5 731.3 Z" fill="#fbfaf6" stroke="#b9b3a8" stroke-width="3" stroke-linejoin="round"/><circle cx="588.0" cy="745.0" r="35.0" fill="#fbfaf6"/><circle cx="588.0" cy="745.0" r="18.5" fill="#2f2b28"/><path d="M615.0 746.2 L578.9 714.6 L255.0 730.0 L576.2 774.5 Z" fill="#fbfaf6" stroke="#b9b3a8" stroke-width="3" stroke-linejoin="round"/><circle cx="588.0" cy="745.0" r="30.0" fill="#fbfaf6"/><circle cx="588.0" cy="745.0" r="18.5" fill="#2f2b28"/><path d="M853.4 723.3 L853.2 779.4 L1118.0 1056.4 L908.0 735.8 Z" fill="#fbfaf6" stroke="#b9b3a8" stroke-width="3" stroke-linejoin="round"/><circle cx="873.0" cy="748.0" r="35.0" fill="#fbfaf6"/><circle cx="873.0" cy="748.0" r="18.5" fill="#2f2b28"/><path d="M474.2 833.9 L434.3 866.0 L402.0 1161.4 L496.8 879.8 Z" fill="#fbfaf6" stroke="#b9b3a8" stroke-width="3" stroke-linejoin="round"/><circle cx="468.0" cy="862.0" r="32.0" fill="#fbfaf6"/><circle cx="468.0" cy="862.0" r="18.5" fill="#2f2b28"/><path d="M416.3 1136.4 L368.7 1155.3 L292.0 1354.4 L424.3 1187.0 Z" fill="#fbfaf6" stroke="#b9b3a8" stroke-width="3" stroke-linejoin="round"/><circle cx="402.0" cy="1161.4" r="32.0" fill="#fbfaf6"/><circle cx="402.0" cy="1161.4" r="18.5" fill="#2f2b28"/><path d="M307.5 1332.3 L261.4 1345.8 L208.0 1474.4 L310.6 1380.2 Z" fill="#fbfaf6" stroke="#b9b3a8" stroke-width="3" stroke-linejoin="round"/><circle cx="292.0" cy="1354.4" r="30.0" fill="#fbfaf6"/><circle cx="292.0" cy="1354.4" r="18.5" fill="#2f2b28"/><path d="M1118.3 1027.6 L1085.9 1067.3 L1115.0 1346.4 L1149.9 1067.9 Z" fill="#fbfaf6" stroke="#b9b3a8" stroke-width="3" stroke-linejoin="round"/><circle cx="1118.0" cy="1056.4" r="32.0" fill="#fbfaf6"/><circle cx="1118.0" cy="1056.4" r="18.5" fill="#2f2b28"/><path d="M1115.0 1319.4 L1085.0 1356.9 L1115.0 1474.4 L1145.0 1356.9 Z" fill="#fbfaf6" stroke="#b9b3a8" stroke-width="3" stroke-linejoin="round"/><circle cx="1115.0" cy="1346.4" r="30.0" fill="#fbfaf6"/><circle cx="1115.0" cy="1346.4" r="18.5" fill="#2f2b28"/><path d="M623.5 1224.6 L593.6 1266.3 L637.0 1478.4 L657.6 1262.9 Z" fill="#fbfaf6" stroke="#b9b3a8" stroke-width="3" stroke-linejoin="round"/><circle cx="625.0" cy="1253.4" r="32.0" fill="#fbfaf6"/><circle cx="625.0" cy="1253.4" r="18.5" fill="#2f2b28"/><path d="M822.0 1227.6 L790.0 1267.6 L822.0 1506.4 L854.0 1267.6 Z" fill="#fbfaf6" stroke="#b9b3a8" stroke-width="3" stroke-linejoin="round"/><circle cx="822.0" cy="1256.4" r="32.0" fill="#fbfaf6"/><circle cx="822.0" cy="1256.4" r="18.5" fill="#2f2b28"/><path d="M636.7 1450.2 L605.1 1490.5 L640.0 1802.0 L669.1 1489.9 Z" fill="#fbfaf6" stroke="#b9b3a8" stroke-width="3" stroke-linejoin="round"/><circle cx="637.0" cy="1479.0" r="32.0" fill="#fbfaf6"/><circle cx="637.0" cy="1479.0" r="18.5" fill="#2f2b28"/><path d="M820.1 1478.3 L790.8 1520.3 L843.0 1822.0 L854.7 1516.0 Z" fill="#fbfaf6" stroke="#b9b3a8" stroke-width="3" stroke-linejoin="round"/><circle cx="822.0" cy="1507.0" r="32.0" fill="#fbfaf6"/><circle cx="822.0" cy="1507.0" r="18.5" fill="#2f2b28"/><path d="M665.2 1802.0 L630.2 1774.0 L415.0 1802.0 L630.2 1830.0 Z" fill="#fbfaf6" stroke="#b9b3a8" stroke-width="3" stroke-linejoin="round"/><circle cx="640.0" cy="1802.0" r="28.0" fill="#fbfaf6"/><circle cx="640.0" cy="1802.0" r="18.5" fill="#2f2b28"/><path d="M440.0 1805.2 L408.9 1773.0 L338.0 1792.0 L401.7 1828.5 Z" fill="#fbfaf6" stroke="#b9b3a8" stroke-width="3" stroke-linejoin="round"/><circle cx="415.0" cy="1802.0" r="28.0" fill="#fbfaf6"/><circle cx="415.0" cy="1802.0" r="18.5" fill="#2f2b28"/><path d="M865.5 1823.2 L835.6 1796.6 L750.0 1817.0 L832.9 1846.5 Z" fill="#fbfaf6" stroke="#b9b3a8" stroke-width="3" stroke-linejoin="round"/><circle cx="843.0" cy="1822.0" r="25.0" fill="#fbfaf6"/><circle cx="843.0" cy="1822.0" r="18.5" fill="#2f2b28"/><path d="M575.9 1856.6 L615.9 1855.4 L640.0 1802.0 L583.5 1817.3 Z" fill="#fbfaf6" stroke="#b9b3a8" stroke-width="3" stroke-linejoin="round"/><circle cx="593.0" cy="1842.0" r="25.0" fill="#fbfaf6"/><circle cx="593.0" cy="1842.0" r="18.5" fill="#2f2b28"/><circle cx="735" cy="1895" r="30" fill="#fbfaf6" stroke="#b9b3a8" stroke-width="3"/><circle cx="735" cy="1895" r="18" fill="#2f2b28"/></g></svg></div>
<div style="left:1123px;top:47px;width:318px;height:19px;background:#a6a5a2;"></div>
<div style="left:1123px;top:47px;width:92px;height:19px;background:#cbcac7;border-radius:0 3px 0 0;"></div>
<div style="left:1123px;top:47px;width:92px;height:2px;background:#3f7cc4;"></div>
<svg style="left:1131px;top:51px;" width="11" height="10" viewBox="0 0 11 10"><path d="M0.6 1.5 H2 M3.6 1.5 H10.6 M3.6 5 H10.6 M3.6 8.5 H10.6 M2.2 5 H2.6 M2.2 8.5 H2.6" stroke="#4f4e4c" stroke-width="1.2" fill="none"/></svg>
<span class="t" style="top:50px;left:1147px;letter-spacing:0.39px;">Hierarchy</span>
<svg style="left:1407px;top:51.5px;" width="10" height="11"><use href="#lock"/></svg>
<svg style="left:1426px;top:51px;" width="4" height="12"><use href="#keb"/></svg>
<div style="left:1123px;top:66px;width:318px;height:21px;background:#cbcac7;"></div>
<div style="left:1123px;top:86px;width:318px;height:1px;background:#9d9c9a;"></div>
<svg style="left:1129.5px;top:69.5px;" width="13" height="13" viewBox="0 0 13 13"><path d="M6.5 0.5 V12.5 M0.5 6.5 H12.5" stroke="#3d3c3b" stroke-width="1.7"/></svg>
<svg style="left:1146px;top:74px;" width="8" height="6"><use href="#dd"/></svg>
<div class="fld" style="left:1166.5px;top:69px;width:271px;height:14px;"></div>
<svg style="left:1171px;top:72.5px;" width="12" height="8.5"><use href="#ssrch"/></svg>
<span class="t" style="top:69px;left:1185px;color:#8b8a88;letter-spacing:-0.17px;">All</span>
<div style="left:1123px;top:87px;width:318px;height:24px;background:#e8e7e5;"></div>
<svg style="left:1128px;top:93px;" width="8" height="12" viewBox="0 0 8 12"><path d="M6.4 1.4 L1.6 6 L6.4 10.6" fill="none" stroke="#777674" stroke-width="1.3"/></svg>
<svg style="left:1255.5px;top:91.5px;" width="15" height="15"><use href="#pcube"/></svg>
<span class="t" style="top:92px;left:1272.9px;font-weight:bold;letter-spacing:-0.07px;">Anatol</span>
<div style="left:1123px;top:111px;width:32px;height:486px;background:#a9a8a6;"></div>
<div style="left:1155px;top:111px;width:273px;height:486px;background:#c2c1bf;"></div>
<div style="left:1428px;top:111px;width:13px;height:486px;background:#b5b4b2;"></div>
<svg style="left:1430px;top:115px;" width="10" height="8" viewBox="0 0 10 8"><path d="M1 7 H9 L5 1.5 Z" fill="#5f5e5c"/></svg>
<svg style="left:1430px;top:586px;" width="10" height="8" viewBox="0 0 10 8"><path d="M1 1 H9 L5 6.5 Z" fill="#5f5e5c"/></svg>
<div style="left:1430px;top:246px;width:9px;height:323px;background:#9b9a98;border-radius:4.5px;"></div>
<div style="left:1123px;top:405px;width:32px;height:15.5px;background:#9f9e9c;"></div>
<div style="left:1155px;top:405px;width:273px;height:15.5px;background:#b3b2b0;"></div>
<div class="clip" style="left:0;top:111px;width:1918px;height:486px"><div style="left:0;top:-111px;width:1918px;height:700px">
<svg style="left:1196.5px;top:101.2px;" width="16" height="16"><use href="#cube"/></svg>
<span class="t" style="top:101px;left:1215.3px;color:#1d487f;letter-spacing:0.2px;">foot R</span>
<svg style="left:1196.5px;top:117.2px;" width="16" height="16"><use href="#cube"/></svg>
<span class="t" style="top:117px;left:1215.3px;color:#1d487f;letter-spacing:0.02px;">forearm L</span>
<svg style="left:1196.5px;top:133.2px;" width="16" height="16"><use href="#cube"/></svg>
<span class="t" style="top:133px;left:1215.3px;color:#1d487f;letter-spacing:-0.01px;">forearm R</span>
<svg style="left:1196.5px;top:149.2px;" width="16" height="16"><use href="#cube"/></svg>
<span class="t" style="top:149px;left:1215.3px;color:#1d487f;letter-spacing:0.2px;">hair</span>
<svg style="left:1196.5px;top:165.2px;" width="16" height="16"><use href="#cube"/></svg>
<span class="t" style="top:165px;left:1215.3px;color:#1d487f;letter-spacing:-0.02px;">hand L</span>
<svg style="left:1196.5px;top:181.2px;" width="16" height="16"><use href="#cube"/></svg>
<span class="t" style="top:181px;left:1215.3px;color:#1d487f;letter-spacing:-0.12px;">hand R</span>
<svg style="left:1196.5px;top:197.2px;" width="16" height="16"><use href="#cube"/></svg>
<span class="t" style="top:197px;left:1215.3px;color:#1d487f;letter-spacing:0.37px;">head</span>
<svg style="left:1196.5px;top:213.2px;" width="16" height="16"><use href="#cube"/></svg>
<span class="t" style="top:213px;left:1215.3px;color:#1d487f;letter-spacing:0.65px;">jaw</span>
<svg style="left:1196.5px;top:229.2px;" width="16" height="16"><use href="#cube"/></svg>
<span class="t" style="top:229px;left:1215.3px;color:#1d487f;letter-spacing:0.18px;">lower leg L</span>
<svg style="left:1196.5px;top:245.2px;" width="16" height="16"><use href="#cube"/></svg>
<span class="t" style="top:245px;left:1215.3px;color:#1d487f;letter-spacing:0.1px;">lower leg R</span>
<svg style="left:1196.5px;top:261.2px;" width="16" height="16"><use href="#cube"/></svg>
<span class="t" style="top:261px;left:1215.3px;color:#1d487f;letter-spacing:0.48px;">neck</span>
<svg style="left:1196.5px;top:277.2px;" width="16" height="16"><use href="#cube"/></svg>
<span class="t" style="top:277px;left:1215.3px;color:#1d487f;letter-spacing:0.09px;">nose</span>
<svg style="left:1196.5px;top:293.2px;" width="16" height="16"><use href="#cube"/></svg>
<span class="t" style="top:293px;left:1215.3px;color:#1d487f;letter-spacing:0.24px;">pupil</span>
<svg style="left:1196.5px;top:309.2px;" width="16" height="16"><use href="#cube"/></svg>
<span class="t" style="top:309px;left:1215.3px;color:#1d487f;letter-spacing:-0.04px;">pupil R</span>
<svg style="left:1183.8px;top:327.9px;" width="10.6" height="10.6"><use href="#td"/></svg>
<svg style="left:1196.5px;top:325.2px;" width="16" height="16"><use href="#cube"/></svg>
<span class="t" style="top:325px;left:1215.3px;color:#1d487f;letter-spacing:0.41px;">root</span>
<svg style="left:1197.8px;top:343.9px;" width="10.6" height="10.6"><use href="#td"/></svg>
<svg style="left:1210.5px;top:341.2px;" width="16" height="16"><use href="#cube"/></svg>
<span class="t" style="top:341px;left:1229.3px;color:#1d487f;letter-spacing:0.3px;">pelvis</span>
<svg style="left:1211.8px;top:359.9px;" width="10.6" height="10.6"><use href="#td"/></svg>
<svg style="left:1224.5px;top:357.2px;" width="16" height="16"><use href="#cube"/></svg>
<span class="t" style="top:357px;left:1243.3px;color:#1d487f;letter-spacing:-0.29px;">body_1</span>
<svg style="left:1225.8px;top:375.9px;" width="10.6" height="10.6"><use href="#td"/></svg>
<svg style="left:1238.5px;top:373.2px;" width="16" height="16"><use href="#cube"/></svg>
<span class="t" style="top:373px;left:1257.3px;color:#1d487f;letter-spacing:-0.65px;">arm_L</span>
<svg style="left:1239.8px;top:391.9px;" width="10.6" height="10.6"><use href="#td"/></svg>
<svg style="left:1252.5px;top:389.2px;" width="16" height="16"><use href="#cube"/></svg>
<span class="t" style="top:389px;left:1271.3px;color:#1d487f;letter-spacing:-0.17px;">forearm_L</span>
<svg style="left:1266.5px;top:405.2px;" width="16" height="16"><use href="#cube"/></svg>
<span class="t" style="top:405px;left:1285.3px;color:#1d487f;letter-spacing:-0.29px;">hand_L</span>
<svg style="left:1225.8px;top:423.9px;" width="10.6" height="10.6"><use href="#tr"/></svg>
<svg style="left:1238.5px;top:421.2px;" width="16" height="16"><use href="#cube"/></svg>
<span class="t" style="top:421px;left:1257.3px;color:#1d487f;letter-spacing:-0.7px;">arm_R</span>
<svg style="left:1238.5px;top:437.2px;" width="16" height="16"><use href="#cube"/></svg>
<span class="t" style="top:437px;left:1257.3px;color:#1d487f;letter-spacing:-0.43px;">head_1</span>
<svg style="left:1238.5px;top:453.2px;" width="16" height="16"><use href="#cube"/></svg>
<span class="t" style="top:453px;left:1257.3px;color:#1d487f;letter-spacing:-0.44px;">jaw_1</span>
<svg style="left:1238.5px;top:469.2px;" width="16" height="16"><use href="#cube"/></svg>
<span class="t" style="top:469px;left:1257.3px;color:#1d487f;letter-spacing:-0.22px;">skirt_1</span>
<svg style="left:1211.8px;top:487.9px;" width="10.6" height="10.6"><use href="#tr"/></svg>
<svg style="left:1224.5px;top:485.2px;" width="16" height="16"><use href="#cube"/></svg>
<span class="t" style="top:485px;left:1243.3px;color:#1d487f;letter-spacing:-0.21px;">thigh_L</span>
<svg style="left:1211.8px;top:503.9px;" width="10.6" height="10.6"><use href="#tr"/></svg>
<svg style="left:1224.5px;top:501.2px;" width="16" height="16"><use href="#cube"/></svg>
<span class="t" style="top:501px;left:1243.3px;color:#1d487f;letter-spacing:-0.24px;">thigh_R</span>
<div style="left:1123px;top:516.8px;width:305px;height:16px;background:#3d76b2;"></div>
<svg style="left:1210.5px;top:517.2px;" width="16" height="16" viewBox="0 0 16 16"><path d="M8 1.6 L14 4.6 V11.4 L8 14.4 L2 11.4 V4.6 Z M2 4.6 L8 7.6 L14 4.6 M8 7.6 V14.4" fill="none" stroke="#f2f2f2" stroke-width="1.1" stroke-linejoin="round"/><circle cx="12.2" cy="12.8" r="3" fill="#1b1b1b"/><path d="M10.4 12.8 H14 M12.2 11 V14.6" stroke="#fff" stroke-width="1.1"/></svg>
<span class="t" style="top:517px;left:1229.3px;color:#ffffff;letter-spacing:0.18px;">LH LimbSolver2D</span>
<svg style="left:1196.5px;top:533.2px;" width="16" height="16"><use href="#cube"/></svg>
<span class="t" style="top:533px;left:1215.3px;color:#1d487f;letter-spacing:0.43px;">skirt</span>
<svg style="left:1196.5px;top:549.2px;" width="16" height="16"><use href="#cube"/></svg>
<span class="t" style="top:549px;left:1215.3px;color:#1d487f;letter-spacing:0.04px;">upper leg L</span>
<svg style="left:1196.5px;top:565.2px;" width="16" height="16"><use href="#cube"/></svg>
<span class="t" style="top:565px;left:1215.3px;color:#1d487f;letter-spacing:0.03px;">upper leg R</span>
<svg style="left:1182.5px;top:581.2px;" width="16" height="16"><use href="#cube"/></svg>
<span class="t" style="top:581px;left:1201.3px;color:#090909;letter-spacing:0.3px;">Sound child</span>
</div></div>
<svg style="left:1124px;top:407px;" width="14" height="11" viewBox="0 0 14 11"><path d="M1 5.5 Q7 -0.2 13 5.5 Q7 11.2 1 5.5 Z" fill="none" stroke="#8a8987" stroke-width="1.3"/><circle cx="7" cy="5.5" r="2.3" fill="#8a8987"/></svg>
<svg style="left:1141px;top:406.5px;" width="13" height="13" viewBox="0 0 13 13"><path d="M1.6 1.2 L3 0.8 L5.6 5 L7 3.6 L8.4 4 L9.4 3.4 L10.8 4.2 L11.8 6.4 Q12.2 9.6 10 11.4 Q7.6 12.6 5.6 11.4 L2.8 8.4 Q2.4 7.2 3.6 7 L4.8 7.6 Z" fill="#8b8a88"/></svg>
<svg style="left:1234px;top:411px;" width="16" height="22" viewBox="0 0 16 22"><path d="M1.5 1.5 V17 L5.2 13.6 L7.8 19.6 L10.4 18.4 L7.8 12.6 H12.8 Z" fill="#111" stroke="#fff" stroke-width="1.1" stroke-linejoin="round"/></svg>
<div style="left:1443px;top:47px;width:475px;height:943px;background:#c2c1bf;"></div>
<div style="left:1443px;top:47px;width:475px;height:19px;background:#a6a5a2;"></div>
<div style="left:1443px;top:47px;width:89px;height:19px;background:#cbcac7;border-radius:0 3px 0 0;"></div>
<svg style="left:1451.5px;top:51.5px;" width="11" height="11" viewBox="0 0 11 11"><circle cx="5.5" cy="5.5" r="5.2" fill="#4f4e4c"/><rect x="4.7" y="4.6" width="1.7" height="4" fill="#cbcac7"/><rect x="4.7" y="2.2" width="1.7" height="1.6" fill="#cbcac7"/></svg>
<span class="t" style="top:50px;left:1467.5px;letter-spacing:0.24px;">Inspector</span>
<span class="t" style="top:50px;left:1540.6px;letter-spacing:-0.03px;">AC Game Editor</span>
<span class="t" style="top:50px;left:1650.5px;letter-spacing:0.34px;">Services</span>
<svg style="left:1884px;top:51px;" width="10" height="11"><use href="#lock"/></svg>
<svg style="left:1903px;top:51px;" width="4" height="12"><use href="#keb"/></svg>
<div style="left:1443px;top:66px;width:475px;height:59px;background:#cbcac7;"></div>
<div style="left:1443px;top:125px;width:475px;height:1px;background:#8c8b89;"></div>
<svg style="left:1449px;top:76px;" width="22" height="24" viewBox="0 0 22 24"><path d="M11 1.4 L20 5.6 V16.4 L11 21 L2 16.4 V5.6 Z M2 5.6 L11 10 L20 5.6 M11 10 V21" fill="none" stroke="#5a5957" stroke-width="1.4" stroke-linejoin="round"/></svg>
<svg style="left:1469.5px;top:97px;" width="7" height="5"><use href="#dd"/></svg>
<div class="cb" style="left:1489.5px;top:77.5px;width:13px;height:13px;"></div>
<svg style="left:1490px;top:78px;" width="12" height="12"><use href="#chk"/></svg>
<div class="fld" style="left:1509.5px;top:76px;width:338.5px;height:16px;"></div>
<span class="t" style="top:77px;left:1512.3px;font-weight:bold;letter-spacing:-0.04px;">LH LimbSolver2D</span>
<div class="cb" style="left:1852.5px;top:77.5px;width:13px;height:13px;"></div>
<span class="t" style="top:77px;left:1870.5px;letter-spacing:0.3px;">Static</span>
<svg style="left:1904.8px;top:81.5px;" width="8.4" height="6"><use href="#dd"/></svg>
<span class="t" style="top:101px;left:1485.6px;letter-spacing:0.08px;">Tag</span>
<div class="pbtn" style="left:1511.5px;top:99.5px;width:181.5px;height:17px;"></div>
<span class="t" style="top:100px;left:1515.5px;letter-spacing:0.35px;">Untagged</span>
<svg style="left:1679.8px;top:105px;" width="8.4" height="6"><use href="#dd"/></svg>
<span class="t" style="top:101px;left:1706.5px;letter-spacing:0.37px;">Layer</span>
<div class="pbtn" style="left:1742.5px;top:99.5px;width:171.5px;height:17px;"></div>
<span class="t" style="top:100px;left:1746.5px;letter-spacing:0.41px;">Default</span>
<svg style="left:1900.8px;top:105px;" width="8.4" height="6"><use href="#dd"/></svg>
<div style="left:1443px;top:126px;width:475px;height:20px;background:#cbcac7;"></div>
<svg style="left:1449px;top:132px;" width="9" height="9"><use href="#td"/></svg>
<span class="t" style="top:129px;left:1503.7px;font-weight:bold;letter-spacing:0.23px;">Transform</span>
<svg style="left:1860px;top:130px;" width="11.5" height="11.5"><use href="#help"/></svg>
<span class="t" style="top:129px;left:1665.8px;width:400px;text-align:center;font-size:9px;color:#cbcac7;font-weight:bold;letter-spacing:0px;">?</span>
<svg style="left:1879.5px;top:130px;" width="12" height="12"><use href="#preset"/></svg>
<svg style="left:1903.5px;top:130px;" width="4" height="12"><use href="#keb"/></svg>
<svg style="left:1464.5px;top:129.5px;" width="14" height="14"><use href="#xf"/></svg>
<span class="t" style="top:153px;left:1462.5px;letter-spacing:0.19px;">Position</span>
<span class="t" style="top:153px;left:1639px;letter-spacing:0.2px;">X</span>
<div class="fld" style="left:1650.5px;top:152px;width:76.5px;height:16px;"></div>
<span class="t" style="top:153px;left:1653.5px;letter-spacing:0.2px;">0</span>
<span class="t" style="top:153px;left:1732.5px;letter-spacing:0.2px;">Y</span>
<div class="fld" style="left:1744px;top:152px;width:76px;height:16px;"></div>
<span class="t" style="top:153px;left:1747px;letter-spacing:0.2px;">0</span>
<span class="t" style="top:153px;left:1826px;letter-spacing:0.2px;">Z</span>
<div class="fld" style="left:1837.8px;top:152px;width:76.2px;height:16px;"></div>
<span class="t" style="top:153px;left:1840.8px;letter-spacing:0.2px;">0</span>
<span class="t" style="top:175px;left:1462.5px;letter-spacing:0.19px;">Rotation</span>
<span class="t" style="top:175px;left:1639px;letter-spacing:0.2px;">X</span>
<div class="fld" style="left:1650.5px;top:174px;width:76.5px;height:16px;"></div>
<span class="t" style="top:175px;left:1653.5px;letter-spacing:0.2px;">0</span>
<span class="t" style="top:175px;left:1732.5px;letter-spacing:0.2px;">Y</span>
<div class="fld" style="left:1744px;top:174px;width:76px;height:16px;"></div>
<span class="t" style="top:175px;left:1747px;letter-spacing:0.2px;">0</span>
<span class="t" style="top:175px;left:1826px;letter-spacing:0.2px;">Z</span>
<div class="fld" style="left:1837.8px;top:174px;width:76.2px;height:16px;"></div>
<span class="t" style="top:175px;left:1840.8px;letter-spacing:0.2px;">-89.582</span>
<span class="t" style="top:195px;left:1462.5px;letter-spacing:0.24px;">Scale</span>
<span class="t" style="top:195px;left:1639px;letter-spacing:0.2px;">X</span>
<div class="fld" style="left:1650.5px;top:194px;width:76.5px;height:16px;"></div>
<span class="t" style="top:195px;left:1653.5px;letter-spacing:0.2px;">1</span>
<span class="t" style="top:195px;left:1732.5px;letter-spacing:0.2px;">Y</span>
<div class="fld" style="left:1744px;top:194px;width:76px;height:16px;"></div>
<span class="t" style="top:195px;left:1747px;letter-spacing:0.2px;">1</span>
<span class="t" style="top:195px;left:1826px;letter-spacing:0.2px;">Z</span>
<div class="fld" style="left:1837.8px;top:194px;width:76.2px;height:16px;"></div>
<span class="t" style="top:195px;left:1840.8px;letter-spacing:0.2px;">1</span>
<div style="left:1443px;top:220px;width:475px;height:1px;background:#8c8b89;"></div>
<div style="left:1443px;top:221px;width:475px;height:20px;background:#cbcac7;"></div>
<svg style="left:1449px;top:227px;" width="9" height="9"><use href="#td"/></svg>
<span class="t" style="top:224px;left:1503.7px;font-weight:bold;letter-spacing:0.11px;">Limb Solver 2D (Script)</span>
<svg style="left:1860px;top:225px;" width="11.5" height="11.5"><use href="#help"/></svg>
<span class="t" style="top:224px;left:1665.8px;width:400px;text-align:center;font-size:9px;color:#cbcac7;font-weight:bold;letter-spacing:0px;">?</span>
<svg style="left:1879.5px;top:225px;" width="12" height="12"><use href="#preset"/></svg>
<svg style="left:1903.5px;top:225px;" width="4" height="12"><use href="#keb"/></svg>
<svg style="left:1464px;top:223.5px;" width="14" height="15" viewBox="0 0 14 15"><path d="M1 0.8 H9.6 L13 4.2 V14.2 H1 Z" fill="#f4f4f2" stroke="#b9b8b6" stroke-width="0.6"/><path d="M5.2 4.4 L4.4 11.6 M8.6 4.4 L7.8 11.6 M3.2 6.6 H10.2 M2.8 9.4 H9.8" stroke="#3c9a3a" stroke-width="1.1" fill="none"/></svg>
<div class="cb" style="left:1483.5px;top:224.5px;width:13px;height:13px;"></div>
<svg style="left:1484px;top:225px;" width="12" height="12"><use href="#chk"/></svg>
<span class="t" style="top:248px;left:1462.5px;letter-spacing:0.27px;">Effector</span>
<div class="fld" style="left:1638.5px;top:247px;width:275.5px;height:16px;"></div>
<span class="t" style="top:248px;left:1641.5px;letter-spacing:0.22px;">None (Transform)</span>
<div style="left:1896.5px;top:248px;width:16.5px;height:14px;background:#e3e2e0;border-radius:0 2px 2px 0;"></div>
<svg style="left:1898.5px;top:249.5px;" width="11" height="11" viewBox="0 0 11 11"><circle cx="5.5" cy="5.5" r="4.3" fill="none" stroke="#4f4e4c" stroke-width="1"/><circle cx="5.5" cy="5.5" r="1.5" fill="#4f4e4c"/></svg>
<span class="t" style="top:268px;left:1462.5px;letter-spacing:0.63px;">Target</span>
<div class="fld" style="left:1638.5px;top:267px;width:275.5px;height:16px;"></div>
<span class="t" style="top:268px;left:1641.5px;letter-spacing:0.22px;">None (Transform)</span>
<div style="left:1896.5px;top:268px;width:16.5px;height:14px;background:#e3e2e0;border-radius:0 2px 2px 0;"></div>
<svg style="left:1898.5px;top:269.5px;" width="11" height="11" viewBox="0 0 11 11"><circle cx="5.5" cy="5.5" r="4.3" fill="none" stroke="#4f4e4c" stroke-width="1"/><circle cx="5.5" cy="5.5" r="1.5" fill="#4f4e4c"/></svg>
<span class="t" style="top:288px;left:1462.5px;letter-spacing:0.05px;">Flip</span>
<div class="cb" style="left:1638.5px;top:288.5px;width:13px;height:13px;"></div>
<span class="t" style="top:308px;left:1462.5px;letter-spacing:0.2px;">Constrain Rotation</span>
<div class="cb" style="left:1638.5px;top:308.5px;width:13px;height:13px;"></div>
<svg style="left:1639px;top:309px;" width="12" height="12"><use href="#chk"/></svg>
<span class="t" style="top:328px;left:1462.5px;letter-spacing:0.2px;">Solve from Default Pose</span>
<div class="cb" style="left:1638.5px;top:328.5px;width:13px;height:13px;"></div>
<svg style="left:1639px;top:329px;" width="12" height="12"><use href="#chk"/></svg>
<span class="t" style="top:348px;left:1462.5px;letter-spacing:0.27px;">Weight</span>
<div style="left:1638px;top:354px;width:217px;height:2px;background:#7b7a78;border-radius:1px;"></div>
<div style="left:1849.5px;top:349.5px;width:11px;height:11px;background:#5a5957;border-radius:50%;"></div>
<div class="fld" style="left:1865.5px;top:347px;width:48.5px;height:16px;"></div>
<span class="t" style="top:348px;left:1869px;letter-spacing:0.2px;">1</span>
<div style="left:1550px;top:375px;width:123px;height:17.5px;background:#d3d2d0;border-radius:3px;box-shadow:inset 0 0 0 1px #bdbcba;"></div>
<span class="t" style="top:376px;left:1572.5px;color:#7d7c7a;letter-spacing:0.4px;">Create Target</span>
<div style="left:1678px;top:375px;width:148.2px;height:17.5px;background:#d3d2d0;border-radius:3px;box-shadow:inset 0 0 0 1px #bdbcba;"></div>
<span class="t" style="top:376px;left:1693.3px;color:#7d7c7a;letter-spacing:0.15px;">Restore Default Pose</span>
<div style="left:1443px;top:406px;width:475px;height:1px;background:#8c8b89;"></div>
<div class="pbtn" style="left:1567px;top:416px;width:228.2px;height:22px;"></div>
<span class="t" style="top:420px;left:1636.6px;letter-spacing:0.21px;">Add Component</span>
<div style="left:0px;top:599px;width:897.5px;height:391px;background:#c2c1bf;"></div>
<div style="left:0px;top:599px;width:897.5px;height:19px;background:#a6a5a2;"></div>
<div style="left:83px;top:599px;width:92px;height:19px;background:#cbcac7;border-radius:3px 3px 0 0;"></div>
<svg style="left:6px;top:603.5px;" width="11" height="11" viewBox="0 0 11 11"><rect x="0.6" y="0.6" width="9.8" height="9.8" rx="1" fill="#4f4e4c"/><path d="M2.4 3.2 H8.6 M2.4 5.5 H8.6 M2.4 7.8 H8.6" stroke="#a6a5a2" stroke-width="0.9"/></svg>
<span class="t" style="top:602px;left:22.7px;letter-spacing:0.16px;">Console</span>
<svg style="left:89.5px;top:603px;" width="12" height="12" viewBox="0 0 12 12"><circle cx="6" cy="6" r="5.6" fill="#4f4e4c"/><path d="M6 2 V6 H10" stroke="#cbcac7" stroke-width="1.2" fill="none"/></svg>
<span class="t" style="top:602px;left:106.5px;letter-spacing:0.18px;">Animation</span>
<svg style="left:184.5px;top:604px;" width="12" height="10" viewBox="0 0 12 10"><path d="M1 1 L4.6 5 L1 9 M4.6 5 H8" fill="none" stroke="#5a5957" stroke-width="1.2"/><path d="M7.4 2.6 L11 5 L7.4 7.4 Z" fill="#5a5957"/></svg>
<span class="t" style="top:602px;left:200.4px;letter-spacing:0.18px;">Animator</span>
<svg style="left:865px;top:603px;" width="9" height="10"><use href="#lock"/></svg>
<svg style="left:883.3px;top:602px;" width="4" height="11.5"><use href="#keb"/></svg>
<div style="left:0px;top:618px;width:300px;height:21px;background:#cbcac7;"></div>
<div style="left:0px;top:638px;width:300px;height:1px;background:#9d9c9a;"></div>
<span class="t" style="top:621px;left:4px;letter-spacing:0.22px;">Preview</span>
<div style="left:54.5px;top:618px;width:1px;height:20px;background:#a9a8a6;"></div>
<div style="left:81px;top:618px;width:1px;height:20px;background:#a9a8a6;"></div>
<div style="left:107.5px;top:618px;width:1px;height:20px;background:#a9a8a6;"></div>
<div style="left:134.5px;top:618px;width:1px;height:20px;background:#a9a8a6;"></div>
<div style="left:161.5px;top:618px;width:1px;height:20px;background:#a9a8a6;"></div>
<div style="left:188.5px;top:618px;width:1px;height:20px;background:#a9a8a6;"></div>
<div style="left:215.5px;top:618px;width:1px;height:20px;background:#a9a8a6;"></div>
<svg style="left:60px;top:620px;" width="16" height="16" viewBox="0 0 16 16"><circle cx="8" cy="8" r="6.6" fill="none" stroke="#4a4948" stroke-width="1"/><circle cx="8" cy="8" r="4.3" fill="#a8161c"/></svg>
<svg style="left:87px;top:622.5px;" width="16" height="11" viewBox="0 0 16 11"><rect x="1" y="0.8" width="1.8" height="9.4" fill="#2d2c2b"/><path d="M8.8 0.8 V10.2 L3 5.5 Z M14.8 0.8 V10.2 L9 5.5 Z" fill="#2d2c2b"/></svg>
<svg style="left:115px;top:622.5px;" width="12" height="11" viewBox="0 0 12 11"><rect x="1" y="0.8" width="1.8" height="9.4" fill="#2d2c2b"/><path d="M10.4 0.8 V10.2 L3.4 5.5 Z" fill="#2d2c2b"/></svg>
<svg style="left:143px;top:622.5px;" width="12" height="11" viewBox="0 0 12 11"><path d="M2 0.8 V10.2 L10 5.5 Z" fill="#2d2c2b"/></svg>
<svg style="left:169px;top:622.5px;" width="12" height="11" viewBox="0 0 12 11"><rect x="9.2" y="0.8" width="1.8" height="9.4" fill="#2d2c2b"/><path d="M1.6 0.8 V10.2 L8.6 5.5 Z" fill="#2d2c2b"/></svg>
<svg style="left:193.5px;top:622.5px;" width="16" height="11" viewBox="0 0 16 11"><rect x="13.2" y="0.8" width="1.8" height="9.4" fill="#2d2c2b"/><path d="M1.2 0.8 V10.2 L7 5.5 Z M7.2 0.8 V10.2 L13 5.5 Z" fill="#2d2c2b"/></svg>
<div class="fld" style="left:262px;top:621.5px;width:33.5px;height:14px;"></div>
<span class="t" style="top:621px;left:264.5px;letter-spacing:0.2px;">0</span>
<div style="left:0px;top:639px;width:300px;height:20.5px;background:#cbcac7;"></div>
<div style="left:0px;top:659.5px;width:300px;height:1px;background:#9d9c9a;"></div>
<span class="t" style="top:642px;left:2.3px;letter-spacing:0.23px;">CavemanIdle</span>
<svg style="left:191px;top:646.5px;" width="8" height="6"><use href="#dd"/></svg>
<div style="left:203.5px;top:639px;width:1px;height:20.5px;background:#a9a8a6;"></div>
<div style="left:221.5px;top:639px;width:1px;height:20.5px;background:#a9a8a6;"></div>
<div style="left:246.5px;top:639px;width:1px;height:20.5px;background:#a9a8a6;"></div>
<div style="left:272.5px;top:639px;width:1px;height:20.5px;background:#a9a8a6;"></div>
<svg style="left:228px;top:642px;" width="13" height="13" viewBox="0 0 13 13"><circle cx="6.5" cy="6.5" r="3.4" fill="none" stroke="#2d2c2b" stroke-width="1.1"/><path d="M6.5 0.4 V3.4 M6.5 9.6 V12.6 M0.4 6.5 H3.4 M9.6 6.5 H12.6" stroke="#2d2c2b" stroke-width="1.1"/><circle cx="6.5" cy="6.5" r="0.9" fill="#2d2c2b"/></svg>
<svg style="left:251.5px;top:643px;" width="16" height="13" viewBox="0 0 16 13"><path d="M5.6 1 L10 5.4 L5.6 9.8 L1.2 5.4 Z" fill="#ecebe9" stroke="#7d7c7a" stroke-width="0.9"/><circle cx="5.6" cy="5.4" r="0.8" fill="#7d7c7a"/><path d="M10.2 9.6 H14.6 M12.4 7.4 V11.8" stroke="#2d2c2b" stroke-width="1.1"/></svg>
<svg style="left:278px;top:643px;" width="16" height="14" viewBox="0 0 16 14"><path d="M3.2 0.8 H6.6 V9.6 L4.9 12.4 L3.2 9.6 Z" fill="#ecebe9" stroke="#5a5957" stroke-width="0.9"/><path d="M8.6 9.6 H13.4 M11 7.2 V12" stroke="#2d2c2b" stroke-width="1.1"/></svg>
<svg style="left:45px;top:680.8px;" width="10.5" height="10.5"><use href="#tr"/></svg>
<svg style="left:58px;top:679.2px;" width="12" height="12"><use href="#xf"/></svg>
<span class="t" style="top:678px;left:71.2px;letter-spacing:0.01px;">body_1 : Rotation</span>
<svg style="left:279.5px;top:683.2px;" width="10" height="6"><use href="#oval"/></svg>
<div style="left:0px;top:695.8px;width:300px;height:18px;background:#cac9c7;"></div>
<svg style="left:59px;top:698.8px;" width="10.5" height="10.5"><use href="#tr"/></svg>
<svg style="left:72px;top:697.2px;" width="12" height="12"><use href="#xf"/></svg>
<span class="t" style="top:696px;left:85.2px;letter-spacing:-0px;">arm_L : Rotation</span>
<svg style="left:279.5px;top:701.2px;" width="10" height="6"><use href="#oval"/></svg>
<svg style="left:73px;top:716.8px;" width="10.5" height="10.5"><use href="#tr"/></svg>
<svg style="left:86px;top:715.2px;" width="12" height="12"><use href="#xf"/></svg>
<span class="t" style="top:714px;left:99.2px;letter-spacing:0.06px;">forearm_L : Rotation</span>
<svg style="left:279.5px;top:719.2px;" width="10" height="6"><use href="#oval"/></svg>
<div style="left:0px;top:731.8px;width:300px;height:18px;background:#cac9c7;"></div>
<svg style="left:59px;top:734.8px;" width="10.5" height="10.5"><use href="#tr"/></svg>
<svg style="left:72px;top:733.2px;" width="12" height="12"><use href="#xf"/></svg>
<span class="t" style="top:732px;left:85.2px;letter-spacing:-0.09px;">arm_R : Rotation</span>
<svg style="left:279.5px;top:737.2px;" width="10" height="6"><use href="#oval"/></svg>
<svg style="left:73px;top:752.8px;" width="10.5" height="10.5"><use href="#tr"/></svg>
<svg style="left:86px;top:751.2px;" width="12" height="12"><use href="#xf"/></svg>
<span class="t" style="top:750px;left:99.2px;letter-spacing:-0.04px;">forearm_R : Rotation</span>
<svg style="left:279.5px;top:755.2px;" width="10" height="6"><use href="#oval"/></svg>
<div style="left:0px;top:767.8px;width:300px;height:18px;background:#cac9c7;"></div>
<svg style="left:59px;top:770.8px;" width="10.5" height="10.5"><use href="#tr"/></svg>
<svg style="left:72px;top:769.2px;" width="12" height="12"><use href="#xf"/></svg>
<span class="t" style="top:768px;left:85.2px;letter-spacing:0.03px;">jaw_1 : Rotation</span>
<svg style="left:279.5px;top:773.2px;" width="10" height="6"><use href="#oval"/></svg>
<svg style="left:45px;top:788.8px;" width="10.5" height="10.5"><use href="#tr"/></svg>
<svg style="left:58px;top:787.2px;" width="12" height="12"><use href="#xf"/></svg>
<span class="t" style="top:786px;left:71.2px;letter-spacing:0.03px;">thigh_R : Rotation</span>
<svg style="left:279.5px;top:791.2px;" width="10" height="6"><use href="#oval"/></svg>
<div style="left:0px;top:803.8px;width:300px;height:18px;background:#cac9c7;"></div>
<svg style="left:59px;top:806.8px;" width="10.5" height="10.5"><use href="#tr"/></svg>
<svg style="left:72px;top:805.2px;" width="12" height="12"><use href="#xf"/></svg>
<span class="t" style="top:804px;left:85.2px;letter-spacing:-0.04px;">leg_R : Position</span>
<svg style="left:279.5px;top:809.2px;" width="10" height="6"><use href="#oval"/></svg>
<svg style="left:59px;top:824.8px;" width="10.5" height="10.5"><use href="#tr"/></svg>
<svg style="left:72px;top:823.2px;" width="12" height="12"><use href="#xf"/></svg>
<span class="t" style="top:822px;left:85.2px;letter-spacing:-0.04px;">leg_R : Rotation</span>
<svg style="left:279.5px;top:827.2px;" width="10" height="6"><use href="#oval"/></svg>
<div style="left:0px;top:839.8px;width:300px;height:18px;background:#cac9c7;"></div>
<svg style="left:73px;top:842.8px;" width="10.5" height="10.5"><use href="#tr"/></svg>
<svg style="left:86px;top:841.2px;" width="12" height="12"><use href="#xf"/></svg>
<span class="t" style="top:840px;left:99.2px;letter-spacing:0.01px;">foot_R : Rotation</span>
<svg style="left:279.5px;top:845.2px;" width="10" height="6"><use href="#oval"/></svg>
<div class="pbtn" style="left:35px;top:869px;width:228px;height:19px;"></div>
<span class="t" style="top:871px;left:-51.89px;width:400px;text-align:center;letter-spacing:0.22px;">Add Property</span>
<div style="left:0px;top:969.5px;width:300px;height:1px;background:#9d9c9a;"></div>
<div style="left:0px;top:970.5px;width:300px;height:19.5px;background:#cbcac7;"></div>
<div style="left:138.5px;top:970.5px;width:80px;height:19.5px;background:#efeeec;"></div>
<div style="left:138px;top:970.5px;width:1px;height:19.5px;background:#a9a8a6;"></div>
<div style="left:218.5px;top:970.5px;width:1px;height:19.5px;background:#a9a8a6;"></div>
<span class="t" style="top:973px;left:-21.32px;width:400px;text-align:center;letter-spacing:0.37px;">Dopesheet</span>
<span class="t" style="top:973px;left:58.2px;width:400px;text-align:center;letter-spacing:0.4px;">Curves</span>
<div style="left:299.5px;top:618px;width:1px;height:372px;background:#9d9c9a;"></div>
<div class="clip" style="left:300px;top:618px;width:585px;height:358px">
<div style="left:0px;top:0px;width:585px;height:20.5px;background:#a9a8a6;"></div><div style="left:38px;top:0px;width:507px;height:20.5px;background:#cbcac7;"></div><div style="left:545px;top:0px;width:40px;height:20.5px;background:#bcbbb9;"></div><div style="left:0px;top:20.5px;width:585px;height:338px;background:#c2c1bf;"></div><div style="left:0px;top:20.5px;width:585px;height:20px;background:linear-gradient(#6f6e6c,#807f7d 25%,#81807e);"></div><div style="left:0px;top:40.5px;width:585px;height:18.5px;background:linear-gradient(#6f6e6c,#7f7e7c 30%,#807f7d);"></div><div style="left:0px;top:59.8px;width:585px;height:15.6px;background:#b0afad;"></div><div style="left:0px;top:57.6px;width:585px;height:2.2px;background:#b7b6b4;"></div><div style="left:0px;top:77.8px;width:585px;height:15.6px;background:#b0afad;"></div><div style="left:0px;top:75.6px;width:585px;height:2.2px;background:#b7b6b4;"></div><div style="left:0px;top:95.8px;width:585px;height:15.6px;background:#b0afad;"></div><div style="left:0px;top:93.6px;width:585px;height:2.2px;background:#b7b6b4;"></div><div style="left:0px;top:113.8px;width:585px;height:15.6px;background:#b0afad;"></div><div style="left:0px;top:111.6px;width:585px;height:2.2px;background:#b7b6b4;"></div><div style="left:0px;top:131.8px;width:585px;height:15.6px;background:#b0afad;"></div><div style="left:0px;top:129.6px;width:585px;height:2.2px;background:#b7b6b4;"></div><div style="left:0px;top:149.8px;width:585px;height:15.6px;background:#b0afad;"></div><div style="left:0px;top:147.6px;width:585px;height:2.2px;background:#b7b6b4;"></div><div style="left:0px;top:167.8px;width:585px;height:15.6px;background:#b0afad;"></div><div style="left:0px;top:165.6px;width:585px;height:2.2px;background:#b7b6b4;"></div><div style="left:0px;top:185.8px;width:585px;height:15.6px;background:#b0afad;"></div><div style="left:0px;top:183.6px;width:585px;height:2.2px;background:#b7b6b4;"></div><div style="left:0px;top:203.8px;width:585px;height:15.6px;background:#b0afad;"></div><div style="left:0px;top:201.6px;width:585px;height:2.2px;background:#b7b6b4;"></div><div style="left:0px;top:221.8px;width:585px;height:15.6px;background:#b0afad;"></div><div style="left:0px;top:219.6px;width:585px;height:2.2px;background:#b7b6b4;"></div><div style="left:0px;top:237.6px;width:585px;height:2.2px;background:#b7b6b4;"></div>
<svg style="left:0;top:0" width="585" height="358"><path d="M39.5 59 V358" stroke="#939290" stroke-width="1" opacity="0.9"/><path d="M53.5 59 V358" stroke="#a3a2a0" stroke-width="1" opacity="0.55"/><path d="M53.5 16.5 V20.5" stroke="#4a4948" stroke-width="1"/><path d="M68.5 59 V358" stroke="#a3a2a0" stroke-width="1" opacity="0.55"/><path d="M68.5 16.5 V20.5" stroke="#4a4948" stroke-width="1"/><path d="M82.5 59 V358" stroke="#a3a2a0" stroke-width="1" opacity="0.55"/><path d="M82.5 16.5 V20.5" stroke="#4a4948" stroke-width="1"/><path d="M97.5 59 V358" stroke="#a3a2a0" stroke-width="1" opacity="0.55"/><path d="M97.5 16.5 V20.5" stroke="#4a4948" stroke-width="1"/><path d="M111.5 59 V358" stroke="#939290" stroke-width="1" opacity="0.9"/><path d="M111.5 8.5 V20.5" stroke="#1e1e1e" stroke-width="1.2"/><path d="M126.5 59 V358" stroke="#a3a2a0" stroke-width="1" opacity="0.55"/><path d="M126.5 16.5 V20.5" stroke="#4a4948" stroke-width="1"/><path d="M140.5 59 V358" stroke="#a3a2a0" stroke-width="1" opacity="0.55"/><path d="M140.5 16.5 V20.5" stroke="#4a4948" stroke-width="1"/><path d="M155.5 59 V358" stroke="#a3a2a0" stroke-width="1" opacity="0.55"/><path d="M155.5 16.5 V20.5" stroke="#4a4948" stroke-width="1"/><path d="M169.5 59 V358" stroke="#a3a2a0" stroke-width="1" opacity="0.55"/><path d="M169.5 16.5 V20.5" stroke="#4a4948" stroke-width="1"/><path d="M183.5 59 V358" stroke="#939290" stroke-width="1" opacity="0.9"/><path d="M183.5 8.5 V20.5" stroke="#1e1e1e" stroke-width="1.2"/><path d="M198.5 59 V358" stroke="#a3a2a0" stroke-width="1" opacity="0.55"/><path d="M198.5 16.5 V20.5" stroke="#4a4948" stroke-width="1"/><path d="M212.5 59 V358" stroke="#a3a2a0" stroke-width="1" opacity="0.55"/><path d="M212.5 16.5 V20.5" stroke="#4a4948" stroke-width="1"/><path d="M227.5 59 V358" stroke="#a3a2a0" stroke-width="1" opacity="0.55"/><path d="M227.5 16.5 V20.5" stroke="#4a4948" stroke-width="1"/><path d="M241.5 59 V358" stroke="#a3a2a0" stroke-width="1" opacity="0.55"/><path d="M241.5 16.5 V20.5" stroke="#4a4948" stroke-width="1"/><path d="M256.5 59 V358" stroke="#939290" stroke-width="1" opacity="0.9"/><path d="M256.5 8.5 V20.5" stroke="#1e1e1e" stroke-width="1.2"/><path d="M270.5 59 V358" stroke="#a3a2a0" stroke-width="1" opacity="0.55"/><path d="M270.5 16.5 V20.5" stroke="#4a4948" stroke-width="1"/><path d="M284.5 59 V358" stroke="#a3a2a0" stroke-width="1" opacity="0.55"/><path d="M284.5 16.5 V20.5" stroke="#4a4948" stroke-width="1"/><path d="M299.5 59 V358" stroke="#a3a2a0" stroke-width="1" opacity="0.55"/><path d="M299.5 16.5 V20.5" stroke="#4a4948" stroke-width="1"/><path d="M313.5 59 V358" stroke="#a3a2a0" stroke-width="1" opacity="0.55"/><path d="M313.5 16.5 V20.5" stroke="#4a4948" stroke-width="1"/><path d="M328.5 59 V358" stroke="#939290" stroke-width="1" opacity="0.9"/><path d="M328.5 8.5 V20.5" stroke="#1e1e1e" stroke-width="1.2"/><path d="M342.5 59 V358" stroke="#a3a2a0" stroke-width="1" opacity="0.55"/><path d="M342.5 16.5 V20.5" stroke="#4a4948" stroke-width="1"/><path d="M357.5 59 V358" stroke="#a3a2a0" stroke-width="1" opacity="0.55"/><path d="M357.5 16.5 V20.5" stroke="#4a4948" stroke-width="1"/><path d="M371.5 59 V358" stroke="#a3a2a0" stroke-width="1" opacity="0.55"/><path d="M371.5 16.5 V20.5" stroke="#4a4948" stroke-width="1"/><path d="M386.5 59 V358" stroke="#a3a2a0" stroke-width="1" opacity="0.55"/><path d="M386.5 16.5 V20.5" stroke="#4a4948" stroke-width="1"/><path d="M400.5 59 V358" stroke="#939290" stroke-width="1" opacity="0.9"/><path d="M400.5 8.5 V20.5" stroke="#1e1e1e" stroke-width="1.2"/><path d="M414.5 59 V358" stroke="#a3a2a0" stroke-width="1" opacity="0.55"/><path d="M414.5 16.5 V20.5" stroke="#4a4948" stroke-width="1"/><path d="M429.5 59 V358" stroke="#a3a2a0" stroke-width="1" opacity="0.55"/><path d="M429.5 16.5 V20.5" stroke="#4a4948" stroke-width="1"/><path d="M443.5 59 V358" stroke="#a3a2a0" stroke-width="1" opacity="0.55"/><path d="M443.5 16.5 V20.5" stroke="#4a4948" stroke-width="1"/><path d="M458.5 59 V358" stroke="#a3a2a0" stroke-width="1" opacity="0.55"/><path d="M458.5 16.5 V20.5" stroke="#4a4948" stroke-width="1"/><path d="M472.5 59 V358" stroke="#939290" stroke-width="1" opacity="0.9"/><path d="M472.5 8.5 V20.5" stroke="#1e1e1e" stroke-width="1.2"/><path d="M487.5 59 V358" stroke="#a3a2a0" stroke-width="1" opacity="0.55"/><path d="M487.5 16.5 V20.5" stroke="#4a4948" stroke-width="1"/><path d="M501.5 59 V358" stroke="#a3a2a0" stroke-width="1" opacity="0.55"/><path d="M501.5 16.5 V20.5" stroke="#4a4948" stroke-width="1"/><path d="M516.5 59 V358" stroke="#a3a2a0" stroke-width="1" opacity="0.55"/><path d="M516.5 16.5 V20.5" stroke="#4a4948" stroke-width="1"/><path d="M530.5 59 V358" stroke="#a3a2a0" stroke-width="1" opacity="0.55"/><path d="M530.5 16.5 V20.5" stroke="#4a4948" stroke-width="1"/><path d="M544.5 59 V358" stroke="#939290" stroke-width="1" opacity="0.9"/><path d="M544.5 8.5 V20.5" stroke="#8c8b89" stroke-width="1.2"/><path d="M559.5 59 V358" stroke="#a3a2a0" stroke-width="1" opacity="0.55"/><path d="M559.5 16.5 V20.5" stroke="#8c8b89" stroke-width="1"/><path d="M573.5 59 V358" stroke="#a3a2a0" stroke-width="1" opacity="0.55"/><path d="M573.5 16.5 V20.5" stroke="#8c8b89" stroke-width="1"/><path d="M38 20.5 H585" stroke="#2c2b2a" stroke-width="1"/><text x="42.2" y="14" font-size="10" fill="#3c3b3a" font-family="Liberation Sans, sans-serif" letter-spacing="0.35">0:00</text><text x="114.4" y="14" font-size="10" fill="#3c3b3a" font-family="Liberation Sans, sans-serif" letter-spacing="0.35">0:05</text><text x="186.6" y="14" font-size="10" fill="#3c3b3a" font-family="Liberation Sans, sans-serif" letter-spacing="0.35">0:10</text><text x="258.8" y="14" font-size="10" fill="#3c3b3a" font-family="Liberation Sans, sans-serif" letter-spacing="0.35">0:15</text><text x="331" y="14" font-size="10" fill="#3c3b3a" font-family="Liberation Sans, sans-serif" letter-spacing="0.35">0:20</text><text x="403.2" y="14" font-size="10" fill="#3c3b3a" font-family="Liberation Sans, sans-serif" letter-spacing="0.35">0:25</text><text x="475.4" y="14" font-size="10" fill="#3c3b3a" font-family="Liberation Sans, sans-serif" letter-spacing="0.35">0:30</text><text x="547.6" y="14" font-size="10" fill="#8c8b89" font-family="Liberation Sans, sans-serif" letter-spacing="0.35">0:35</text></svg>
<svg style="left:32.8px;top:41.5px" width="12" height="12"><use href="#keyd"/></svg><svg style="left:119.44px;top:41.5px" width="12" height="12"><use href="#keyd"/></svg><svg style="left:177.2px;top:41.5px" width="12" height="12"><use href="#keyd"/></svg><svg style="left:278.28px;top:41.5px" width="12" height="12"><use href="#keyd"/></svg><svg style="left:350.48px;top:41.5px" width="12" height="12"><use href="#keyd"/></svg><svg style="left:393.8px;top:41.5px" width="12" height="12"><use href="#keyd"/></svg><svg style="left:451.56px;top:41.5px" width="12" height="12"><use href="#keyd"/></svg><svg style="left:538.2px;top:41.5px" width="12" height="12"><use href="#keyd"/></svg><svg style="left:32.8px;top:59.6px" width="12" height="12"><use href="#key"/></svg><svg style="left:177.2px;top:59.6px" width="12" height="12"><use href="#key"/></svg><svg style="left:538.2px;top:59.6px" width="12" height="12"><use href="#key"/></svg><svg style="left:32.8px;top:77.6px" width="12" height="12"><use href="#key"/></svg><svg style="left:177.2px;top:77.6px" width="12" height="12"><use href="#key"/></svg><svg style="left:538.2px;top:77.6px" width="12" height="12"><use href="#key"/></svg><svg style="left:32.8px;top:95.6px" width="12" height="12"><use href="#key"/></svg><svg style="left:177.2px;top:95.6px" width="12" height="12"><use href="#key"/></svg><svg style="left:538.2px;top:95.6px" width="12" height="12"><use href="#key"/></svg><svg style="left:32.8px;top:113.6px" width="12" height="12"><use href="#key"/></svg><svg style="left:119.44px;top:113.6px" width="12" height="12"><use href="#key"/></svg><svg style="left:393.8px;top:113.6px" width="12" height="12"><use href="#key"/></svg><svg style="left:538.2px;top:113.6px" width="12" height="12"><use href="#key"/></svg><svg style="left:32.8px;top:131.6px" width="12" height="12"><use href="#key"/></svg><svg style="left:278.28px;top:131.6px" width="12" height="12"><use href="#key"/></svg><svg style="left:538.2px;top:131.6px" width="12" height="12"><use href="#key"/></svg><svg style="left:32.8px;top:149.6px" width="12" height="12"><use href="#key"/></svg><svg style="left:119.44px;top:149.6px" width="12" height="12"><use href="#key"/></svg><svg style="left:393.8px;top:149.6px" width="12" height="12"><use href="#key"/></svg><svg style="left:538.2px;top:149.6px" width="12" height="12"><use href="#key"/></svg><svg style="left:32.8px;top:167.6px" width="12" height="12"><use href="#key"/></svg><svg style="left:350.48px;top:167.6px" width="12" height="12"><use href="#key"/></svg><svg style="left:538.2px;top:167.6px" width="12" height="12"><use href="#key"/></svg><svg style="left:32.8px;top:185.6px" width="12" height="12"><use href="#key"/></svg><svg style="left:350.48px;top:185.6px" width="12" height="12"><use href="#key"/></svg><svg style="left:538.2px;top:185.6px" width="12" height="12"><use href="#key"/></svg><svg style="left:32.8px;top:203.6px" width="12" height="12"><use href="#key"/></svg><svg style="left:350.48px;top:203.6px" width="12" height="12"><use href="#key"/></svg><svg style="left:451.56px;top:203.6px" width="12" height="12"><use href="#key"/></svg><svg style="left:538.2px;top:203.6px" width="12" height="12"><use href="#key"/></svg><svg style="left:32.8px;top:221.6px" width="12" height="12"><use href="#key"/></svg><svg style="left:451.56px;top:221.6px" width="12" height="12"><use href="#key"/></svg><svg style="left:538.2px;top:221.6px" width="12" height="12"><use href="#key"/></svg>
<div style="left:37px;top:0;width:1.4px;height:358px;background:#f6f6f4"></div>
</div>
<div style="left:885px;top:618px;width:12.5px;height:20.5px;background:#cbcac7;"></div>
<svg style="left:888.7px;top:623.5px;" width="4" height="9.5"><use href="#keb"/></svg>
<div style="left:885px;top:638.5px;width:12.5px;height:338px;background:#c2c1bf;"></div>
<svg style="left:886.5px;top:664px;" width="10" height="7" viewBox="0 0 10 7"><path d="M1 6 H9 L5 1 Z" fill="#5f5e5c"/></svg>
<svg style="left:886.5px;top:966px;" width="10" height="7" viewBox="0 0 10 7"><path d="M1 1 H9 L5 6 Z" fill="#5f5e5c"/></svg>
<div style="left:887px;top:675.5px;width:9.5px;height:285px;background:#a09f9d;border-radius:4.7px;"></div>
<div style="left:300px;top:976px;width:597.5px;height:14px;background:#bbbab8;"></div>
<svg style="left:304px;top:979.5px;" width="8" height="9" viewBox="0 0 8 9"><path d="M6.4 0.8 V8.2 L1 4.5 Z" fill="#3d3c3b"/></svg>
<svg style="left:873.5px;top:979.5px;" width="8" height="9" viewBox="0 0 8 9"><path d="M1.6 0.8 V8.2 L7 4.5 Z" fill="#3d3c3b"/></svg>
<div style="left:316px;top:979px;width:554px;height:9.5px;background:#a3a2a0;border-radius:5px;"></div>
<div style="left:328px;top:979px;width:1px;height:9.5px;background:#8d8c8a;"></div>
<div style="left:857.5px;top:979px;width:1px;height:9.5px;background:#8d8c8a;"></div>
<div style="left:900px;top:599px;width:541px;height:391px;background:#c2c1bf;"></div>
<div style="left:900px;top:599px;width:541px;height:19px;background:#a6a5a2;"></div>
<div style="left:900px;top:599px;width:77px;height:19px;background:#cbcac7;border-radius:0 3px 0 0;"></div>
<svg style="left:907.5px;top:603px;" width="13" height="11" viewBox="0 0 13 11"><path d="M0.6 0.8 H5 L6.4 2.4 H12.4 V10.4 H0.6 Z" fill="#4f4e4c"/></svg>
<span class="t" style="top:602px;left:924.7px;letter-spacing:0.38px;">Project</span>
<svg style="left:1407px;top:603px;" width="9" height="10"><use href="#lock"/></svg>
<svg style="left:1426px;top:602px;" width="4" height="11.5"><use href="#keb"/></svg>
<div style="left:900px;top:618px;width:541px;height:21px;background:#cbcac7;"></div>
<div style="left:900px;top:638.5px;width:541px;height:1px;background:#9d9c9a;"></div>
<svg style="left:907px;top:622px;" width="12" height="12" viewBox="0 0 12 12"><path d="M6 0.4 V11.6 M0.4 6 H11.6" stroke="#3d3c3b" stroke-width="1.7"/></svg>
<svg style="left:923.5px;top:625.5px;" width="8" height="6"><use href="#dd"/></svg>
<div class="fld" style="left:1021px;top:620.5px;width:299.5px;height:14.5px;"></div>
<svg style="left:1026px;top:623.5px;" width="10" height="10" viewBox="0 0 10 10"><circle cx="4" cy="4" r="2.7" fill="none" stroke="#5c5b59" stroke-width="1.1"/><path d="M6 6 L8.6 8.8" stroke="#5c5b59" stroke-width="1.3"/></svg>
<div style="left:1324px;top:618px;width:1px;height:20.5px;background:#a9a8a6;"></div>
<div style="left:1349.5px;top:618px;width:1px;height:20.5px;background:#a9a8a6;"></div>
<div style="left:1375.5px;top:618px;width:1px;height:20.5px;background:#a9a8a6;"></div>
<div style="left:1401.5px;top:618px;width:1px;height:20.5px;background:#a9a8a6;"></div>
<svg style="left:1329px;top:621px;" width="15" height="15" viewBox="0 0 15 15"><circle cx="4.4" cy="10.4" r="3.4" fill="#4f4e4c"/><rect x="2" y="1.2" width="5.4" height="4.6" fill="#4f4e4c"/><path d="M10.6 3.4 L14 10 H7.2 Z" fill="#4f4e4c"/></svg>
<svg style="left:1355px;top:622px;" width="15" height="13" viewBox="0 0 15 13"><path d="M1 7 L7 1 H12.6 V6.6 L6.6 12.4 Z" fill="#4f4e4c"/><circle cx="10.4" cy="3.4" r="1" fill="#cbcac7"/></svg>
<svg style="left:1381px;top:621px;" width="14" height="14" viewBox="0 0 14 14"><path d="M7 0.8 L8.8 5 L13.4 5.4 L9.9 8.4 L11 12.8 L7 10.4 L3 12.8 L4.1 8.4 L0.6 5.4 L5.2 5 Z" fill="#8d8c8a"/></svg>
<svg style="left:1405px;top:622.5px;" width="17" height="12" viewBox="0 0 17 12"><path d="M1 6 Q8 -0.5 15 6 Q8 12.5 1 6 Z" fill="none" stroke="#4f4e4c" stroke-width="1.1"/><circle cx="8" cy="6" r="2" fill="#4f4e4c"/><path d="M2.5 11.5 L13.5 0.5" stroke="#4f4e4c" stroke-width="1.3"/></svg>
<span class="t" style="top:621px;left:1422.8px;letter-spacing:-1.15px;">21</span>
<div style="left:1056.5px;top:639.5px;width:12.5px;height:350.5px;background:#bbbab8;"></div>
<div style="left:1069px;top:639.5px;width:1px;height:350.5px;background:#9d9c9a;"></div>
<svg style="left:1057.5px;top:645px;" width="10" height="7" viewBox="0 0 10 7"><path d="M1 6 H9 L5 1 Z" fill="#5f5e5c"/></svg>
<svg style="left:1057.5px;top:979px;" width="10" height="7" viewBox="0 0 10 7"><path d="M1 1 H9 L5 6 Z" fill="#5f5e5c"/></svg>
<div style="left:1058.5px;top:703px;width:9px;height:252px;background:#9b9a98;border-radius:4.5px;"></div>
<div class="clip" style="left:900px;top:639.5px;width:156.5px;height:350.5px"><div style="left:-900px;top:-639.5px;width:1918px;height:1009px">
<svg style="left:931.2px;top:632.5px;" width="13" height="13"><use href="#srch"/></svg>
<span class="t" style="top:631px;left:948.4px;letter-spacing:0.27px;">All Excluded</span>
<svg style="left:931.2px;top:648.5px;" width="13" height="13"><use href="#srch"/></svg>
<span class="t" style="top:647px;left:948.4px;letter-spacing:0.32px;">All Materials</span>
<svg style="left:931.2px;top:664.5px;" width="13" height="13"><use href="#srch"/></svg>
<span class="t" style="top:663px;left:948.4px;letter-spacing:0.32px;">All Models</span>
<svg style="left:931.2px;top:680.5px;" width="13" height="13"><use href="#srch"/></svg>
<span class="t" style="top:679px;left:948.4px;letter-spacing:0.19px;">All Prefabs</span>
<svg style="left:903.2px;top:712.6px;" width="10.6" height="10.6"><use href="#td"/></svg>
<svg style="left:917px;top:708.7px;" width="17" height="17"><use href="#foldb"/></svg>
<span class="t" style="top:710px;left:934.8px;font-weight:bold;letter-spacing:0.23px;">Assets</span>
<svg style="left:917.2px;top:728.6px;" width="10.6" height="10.6"><use href="#tr"/></svg>
<svg style="left:931px;top:725.7px;" width="16" height="16"><use href="#fold"/></svg>
<span class="t" style="top:726px;left:948.8px;letter-spacing:0.34px;">AdventureCreator</span>
<svg style="left:917.2px;top:744.6px;" width="10.6" height="10.6"><use href="#td"/></svg>
<svg style="left:931px;top:740.7px;" width="17" height="17"><use href="#foldb"/></svg>
<span class="t" style="top:742px;left:948.8px;letter-spacing:-0.27px;">Saga_I</span>
<svg style="left:945px;top:757.7px;" width="16" height="16"><use href="#fold"/></svg>
<span class="t" style="top:758px;left:962.8px;letter-spacing:0.36px;">ActionLists</span>
<svg style="left:945px;top:773.7px;" width="16" height="16"><use href="#fold"/></svg>
<span class="t" style="top:774px;left:962.8px;letter-spacing:0.25px;">Animations</span>
<svg style="left:945px;top:789.7px;" width="16" height="16"><use href="#fold"/></svg>
<span class="t" style="top:790px;left:962.8px;letter-spacing:0.35px;">Managers</span>
<svg style="left:945px;top:804.7px;" width="17" height="17"><use href="#foldb"/></svg>
<span class="t" style="top:806px;left:962.8px;letter-spacing:0.4px;">Scenes</span>
<svg style="left:945px;top:821.7px;" width="16" height="16"><use href="#fold"/></svg>
<span class="t" style="top:822px;left:962.8px;letter-spacing:-0.4px;">UI</span>
<svg style="left:917.2px;top:840.6px;" width="10.6" height="10.6"><use href="#td"/></svg>
<svg style="left:931px;top:836.7px;" width="17" height="17"><use href="#foldb"/></svg>
<span class="t" style="top:838px;left:948.8px;letter-spacing:0.14px;">Sprites</span>
<svg style="left:945px;top:853.7px;" width="16" height="16"><use href="#fold"/></svg>
<span class="t" style="top:854px;left:962.8px;letter-spacing:0.36px;">Backgrounds</span>
<svg style="left:931.2px;top:872.6px;" width="10.6" height="10.6"><use href="#td"/></svg>
<svg style="left:945px;top:868.7px;" width="17" height="17"><use href="#foldb"/></svg>
<span class="t" style="top:870px;left:962.8px;letter-spacing:0.32px;">Characters</span>
<div style="left:900px;top:885.7px;width:157px;height:16px;background:#aeadab;"></div>
<svg style="left:945.2px;top:888.6px;" width="10.6" height="10.6"><use href="#td"/></svg>
<svg style="left:959px;top:884.7px;" width="17" height="17"><use href="#foldb"/></svg>
<span class="t" style="top:886px;left:976.8px;letter-spacing:0.14px;">Anatol</span>
<svg style="left:973px;top:901.7px;" width="16" height="16"><use href="#fold"/></svg>
<span class="t" style="top:902px;left:990.8px;letter-spacing:0.13px;">brown_fur</span>
<svg style="left:973px;top:917.7px;" width="16" height="16"><use href="#fold"/></svg>
<span class="t" style="top:918px;left:990.8px;letter-spacing:0.05px;">grey_fur</span>
<svg style="left:973px;top:933.7px;" width="16" height="16"><use href="#fold"/></svg>
<span class="t" style="top:934px;left:990.8px;letter-spacing:0.03px;">hair</span>
<svg style="left:973px;top:949.7px;" width="16" height="16"><use href="#fold"/></svg>
<span class="t" style="top:950px;left:990.8px;letter-spacing:0.16px;">spotted_fur</span>
<svg style="left:973px;top:965.7px;" width="16" height="16"><use href="#fold"/></svg>
<span class="t" style="top:966px;left:990.8px;letter-spacing:0.38px;">weapons</span>
<svg style="left:945px;top:981.7px;" width="16" height="16"><use href="#fold"/></svg>
<span class="t" style="top:982px;left:962.8px;letter-spacing:0.39px;">Objects</span>
</div></div>
<div style="left:1428px;top:659px;width:13px;height:311px;background:#bbbab8;"></div>
<svg style="left:1429.5px;top:664px;" width="10" height="7" viewBox="0 0 10 7"><path d="M1 6 H9 L5 1 Z" fill="#5f5e5c"/></svg>
<svg style="left:1429.5px;top:958px;" width="10" height="7" viewBox="0 0 10 7"><path d="M1 1 H9 L5 6 Z" fill="#5f5e5c"/></svg>
<div style="left:1430px;top:772px;width:9px;height:122px;background:#9b9a98;border-radius:4.5px;"></div>
<div class="clip" style="left:1070px;top:659px;width:358px;height:311px"><div style="left:-1070px;top:-659px;width:1918px;height:1009px"><div style="left:1084.5px;top:636px;width:56.5px;height:41.5px;background:#cbcac8;box-shadow:0 1px 2px rgba(0,0,0,0.45);"></div><svg style="left:1084.5px;top:636px" width="56.5" height="41.5" viewBox="0 0 56.5 41.5"><circle cx="8" cy="24" r="1.5" fill="#5a3018"/><path d="M8 25.5 l-2 3 l3 1 l-2 3 M8 26 l2 2 l1 3" stroke="#b98963" stroke-width="1.3" fill="none"/><circle cx="21.5" cy="24" r="1.5" fill="#5a3018"/><path d="M21.5 25.5 l-2 3 l3 1 l-2 3 M21.5 26 l2 2 l1 3" stroke="#b98963" stroke-width="1.3" fill="none"/><circle cx="35" cy="24" r="1.5" fill="#5a3018"/><path d="M35 25.5 l-2 3 l3 1 l-2 3 M35 26 l2 2 l1 3" stroke="#b98963" stroke-width="1.3" fill="none"/><circle cx="48.5" cy="24" r="1.5" fill="#5a3018"/><path d="M48.5 25.5 l-2 3 l3 1 l-2 3 M48.5 26 l2 2 l1 3" stroke="#b98963" stroke-width="1.3" fill="none"/><circle cx="8" cy="33" r="1.5" fill="#5a3018"/><path d="M8 34.5 l-2 3 l3 1 l-2 3 M8 35 l2 2 l1 3" stroke="#b98963" stroke-width="1.3" fill="none"/><circle cx="21.5" cy="33" r="1.5" fill="#5a3018"/><path d="M21.5 34.5 l-2 3 l3 1 l-2 3 M21.5 35 l2 2 l1 3" stroke="#b98963" stroke-width="1.3" fill="none"/><circle cx="35" cy="33" r="1.5" fill="#5a3018"/><path d="M35 34.5 l-2 3 l3 1 l-2 3 M35 35 l2 2 l1 3" stroke="#b98963" stroke-width="1.3" fill="none"/><circle cx="48.5" cy="33" r="1.5" fill="#5a3018"/><path d="M48.5 34.5 l-2 3 l3 1 l-2 3 M48.5 35 l2 2 l1 3" stroke="#b98963" stroke-width="1.3" fill="none"/></svg><svg style="left:1132px;top:657px" width="18" height="18" viewBox="0 0 18 18"><circle cx="9" cy="9.6" r="8" fill="#3a3938" opacity="0.5"/><circle cx="9" cy="9" r="7.8" fill="#6c6b69"/><path d="M6.6 5 V13 L13.2 9 Z" fill="#eeeeec"/></svg><div style="left:1152.5px;top:636px;width:56px;height:35.5px;background:#cbcac8;box-shadow:0 1px 2px rgba(0,0,0,0.45);"></div><svg style="left:1152.5px;top:636px" width="56" height="35.5" viewBox="0 0 56 35.5"><circle cx="8" cy="26" r="1.5" fill="#5a3018"/><path d="M8 27.5 l-2 3 l3 1 l-2 3 M8 28 l2 2 l1 3" stroke="#b98963" stroke-width="1.3" fill="none"/><circle cx="22" cy="26" r="1.5" fill="#5a3018"/><path d="M22 27.5 l-2 3 l3 1 l-2 3 M22 28 l2 2 l1 3" stroke="#b98963" stroke-width="1.3" fill="none"/><circle cx="36" cy="26" r="1.5" fill="#5a3018"/><path d="M36 27.5 l-2 3 l3 1 l-2 3 M36 28 l2 2 l1 3" stroke="#b98963" stroke-width="1.3" fill="none"/><circle cx="50" cy="26" r="1.5" fill="#5a3018"/><path d="M50 27.5 l-2 3 l3 1 l-2 3 M50 28 l2 2 l1 3" stroke="#b98963" stroke-width="1.3" fill="none"/></svg><svg style="left:1199.5px;top:657px" width="18" height="18" viewBox="0 0 18 18"><circle cx="9" cy="9.6" r="8" fill="#3a3938" opacity="0.5"/><circle cx="9" cy="9" r="7.8" fill="#6c6b69"/><path d="M6.6 5 V13 L13.2 9 Z" fill="#eeeeec"/></svg><div style="left:1220.5px;top:636px;width:56.5px;height:41.5px;background:#cbcac8;box-shadow:0 1px 2px rgba(0,0,0,0.45);"></div><svg style="left:1220.5px;top:636px" width="56.5" height="41.5" viewBox="0 0 56.5 41.5"><circle cx="8" cy="24" r="1.5" fill="#5a3018"/><path d="M8 25.5 l-2 3 l3 1 l-2 3 M8 26 l2 2 l1 3" stroke="#b98963" stroke-width="1.3" fill="none"/><circle cx="21.5" cy="24" r="1.5" fill="#5a3018"/><path d="M21.5 25.5 l-2 3 l3 1 l-2 3 M21.5 26 l2 2 l1 3" stroke="#b98963" stroke-width="1.3" fill="none"/><circle cx="35" cy="24" r="1.5" fill="#5a3018"/><path d="M35 25.5 l-2 3 l3 1 l-2 3 M35 26 l2 2 l1 3" stroke="#b98963" stroke-width="1.3" fill="none"/><circle cx="48.5" cy="24" r="1.5" fill="#5a3018"/><path d="M48.5 25.5 l-2 3 l3 1 l-2 3 M48.5 26 l2 2 l1 3" stroke="#b98963" stroke-width="1.3" fill="none"/><circle cx="8" cy="33" r="1.5" fill="#5a3018"/><path d="M8 34.5 l-2 3 l3 1 l-2 3 M8 35 l2 2 l1 3" stroke="#b98963" stroke-width="1.3" fill="none"/><circle cx="21.5" cy="33" r="1.5" fill="#5a3018"/><path d="M21.5 34.5 l-2 3 l3 1 l-2 3 M21.5 35 l2 2 l1 3" stroke="#b98963" stroke-width="1.3" fill="none"/><circle cx="35" cy="33" r="1.5" fill="#5a3018"/><path d="M35 34.5 l-2 3 l3 1 l-2 3 M35 35 l2 2 l1 3" stroke="#b98963" stroke-width="1.3" fill="none"/><circle cx="48.5" cy="33" r="1.5" fill="#5a3018"/><path d="M48.5 34.5 l-2 3 l3 1 l-2 3 M48.5 35 l2 2 l1 3" stroke="#b98963" stroke-width="1.3" fill="none"/></svg><svg style="left:1267px;top:657px" width="18" height="18" viewBox="0 0 18 18"><circle cx="9" cy="9.6" r="8" fill="#3a3938" opacity="0.5"/><circle cx="9" cy="9" r="7.8" fill="#6c6b69"/><path d="M6.6 5 V13 L13.2 9 Z" fill="#eeeeec"/></svg><svg style="left:1296px;top:655px" width="48" height="36" viewBox="0 0 48 36"><path d="M8.4 0 V21.6 H26" fill="none" stroke="#1e8f96" stroke-width="3.4"/><path d="M32.4 0 V9" stroke="#1e8f96" stroke-width="3.2"/><rect x="0" y="-6" width="17" height="12" rx="3" fill="#5a5957"/><rect x="24" y="13.6" width="17.4" height="17.4" rx="3.6" fill="#5a5957"/></svg><div style="left:1359px;top:636px;width:51.5px;height:54.5px;background:#575553;box-shadow:0 1px 2px rgba(0,0,0,0.45);"></div><svg style="left:1359px;top:655px" width="51.5" height="36" viewBox="0 0 51.5 36"><path d="M24 2 L27 0 L29 6 L27 14 L29 22 L27 30 M27 8 L22 16 L24 24 L22 31 M29 6 L32 14 L30 22" stroke="#d9ab80" stroke-width="2.2" fill="none"/><path d="M25 4 L28 12 L26 20 L28 28" stroke="#f4e6d6" stroke-width="0.9" fill="none"/></svg><svg style="left:1403px;top:657px" width="18" height="18" viewBox="0 0 18 18"><circle cx="9" cy="9.6" r="8" fill="#3a3938" opacity="0.5"/><circle cx="9" cy="9" r="7.8" fill="#6c6b69"/><path d="M6.6 5 V13 L13.2 9 Z" fill="#eeeeec"/></svg><span class="t" style="left:1012.72px;top:693.5px;width:200px;text-align:center;font-size:10px;letter-spacing:0.23px;color:#111">cave_m...</span><span class="t" style="left:1080.42px;top:693.5px;width:200px;text-align:center;font-size:10px;letter-spacing:0.23px;color:#111">cave_m...</span><span class="t" style="left:1148.22px;top:693.5px;width:200px;text-align:center;font-size:10px;letter-spacing:0.23px;color:#111">cave_m...</span><span class="t" style="left:1216.19px;top:693.5px;width:200px;text-align:center;font-size:10px;letter-spacing:0.57px;color:#111">caveman</span><span class="t" style="left:1283.99px;top:693.5px;width:200px;text-align:center;font-size:10px;letter-spacing:0.57px;color:#111">caveman</span><svg style="left:1086.6px;top:723px" width="52" height="52" viewBox="0 0 52 52"><path d="M6 17.6 H19 M4.6 24.8 H16 M5 31.6 H13.6" stroke="#5a5957" stroke-width="2.6" stroke-linecap="round"/><path d="M31 10 L46.4 37 H15.2 Z" fill="#19888c" stroke="#19888c" stroke-width="3" stroke-linejoin="round"/></svg><div style="left:1155px;top:723.7px;width:51.5px;height:51.5px;background:#fefefe;box-shadow:0 1px 2px rgba(0,0,0,0.45);"></div><svg style="left:1155px;top:723.7px" width="51.5" height="51.5" viewBox="0 0 51.5 51.5"><path d="M11 21 Q4 31 1.5 41.5 Q12 48 28 50 Q45 50 48 38 Q46 23 30 19.5 Q18 18.5 11 21 Z" fill="#f8d0a4"/><path d="M36 27 Q46 32 44 42 Q40 48 30 48.5 Q42 44 40 36 Z" fill="#e0ae86"/><path d="M7.5 0 Q12 10 12 20 Q20 14.5 32 16.5 Q50 21 50.8 37 Q48 51.5 28 52 Q16 51.5 7 47 L8.6 44 Q18 48.4 28 48.4 Q44 47.4 45.6 36 Q44 24 30 21 Q19 20.4 12.4 26 Q9.6 12 5 1 Z" fill="#1e0f08"/><path d="M12 35 Q22 27.5 32 30.6 Q37.6 34 32 37.6 Q24 39 17 37.4 Q26 35.6 27.6 33.6 Q21 31 12 35 Z" fill="#1e0f08"/><path d="M19 35.4 Q25 32.4 29 34 Q25 36.6 19 35.4Z" fill="#b38b6c"/></svg><div style="left:1222.7px;top:723.7px;width:51.5px;height:51.5px;background:#fefefe;box-shadow:0 1px 2px rgba(0,0,0,0.45);"></div><svg style="left:1222.7px;top:723.7px" width="51.5" height="51.5" viewBox="0 0 51.5 51.5"><circle cx="25.7" cy="25.7" r="21.5" fill="#f8d0a4" stroke="#050505" stroke-width="7"/><path d="M42 32 A18 18 0 0 1 14 40 A24 24 0 0 0 42 32 Z" fill="#e0ae86"/></svg><div style="left:1290.5px;top:723.7px;width:51.5px;height:51.5px;background:#fefefe;box-shadow:0 1px 2px rgba(0,0,0,0.45);"></div><svg style="left:1290.5px;top:723.7px" width="51.5" height="51.5" viewBox="0 0 51.5 51.5"><circle cx="25.7" cy="25.7" r="21.5" fill="#e4e4e4" stroke="#050505" stroke-width="7"/><path d="M43 30 A18 18 0 0 1 16 41 A24 24 0 0 0 43 30 Z" fill="#b4b4b6"/></svg><div style="left:1356.6px;top:742.5px;width:56px;height:14.5px;background:#fefefe;box-shadow:0 1px 2px rgba(0,0,0,0.45);"></div><svg style="left:1356.6px;top:742.5px" width="56" height="14.5" viewBox="0 0 56 14.5"><path d="M2 6 Q4 3 14 3 L52 1.4 Q55 3 54.6 8 Q54 12.6 50 13 L12 13 Q2 12.4 2 6 Z" fill="#2a140a"/><path d="M8 7.4 Q26 5 48 5.6 Q50 7.4 47 8.8 Q26 9.6 10 9.4 Z" fill="#6a3c20"/></svg><span class="t" style="left:1012.69px;top:777.9px;width:200px;text-align:center;font-size:10px;letter-spacing:0.18px;color:#111">Caveman...</span><span class="t" style="left:1080.34px;top:777.9px;width:200px;text-align:center;font-size:10px;letter-spacing:0.07px;color:#111">ear</span><span class="t" style="left:1148.14px;top:777.9px;width:200px;text-align:center;font-size:10px;letter-spacing:0.08px;color:#111">eye_clos...</span><span class="t" style="left:1216.05px;top:777.9px;width:200px;text-align:center;font-size:10px;letter-spacing:0.29px;color:#111">eye_open</span><span class="t" style="left:1283.97px;top:777.9px;width:200px;text-align:center;font-size:10px;letter-spacing:0.53px;color:#111">eyebrow</span><div style="left:1086.6px;top:807.5px;width:51.5px;height:51.5px;background:#fefefe;box-shadow:0 1px 2px rgba(0,0,0,0.45);"></div><svg style="left:1086.6px;top:807.5px" width="51.5" height="51.5" viewBox="0 0 51.5 51.5"><path d="M4 8 Q16 2 30 3 Q44 0 50 8 Q52 26 49 46 Q40 52 30 50 Q12 52 4 46 Q0 26 4 8 Z" fill="#f8d0a4"/><path d="M36 8 Q46 8 47 12 Q49 28 46 46 Q40 50 32 49 Q40 30 36 8 Z" fill="#e0ae86"/><path d="M3 8 Q-1 26 3 46 Q8 50 12 48 Q6.5 28 10.5 8 Q6 5 3 8 Z M30 3 Q44 0 50 8 Q52 26 49 46 Q44 50 42 49 Q48 40 47 12 Q46 5 30 6 Z M4 46 Q16 52 30 50 L30 48 Q14 49 6 44 Z" fill="#1e0f08"/></svg><div style="left:1154.5px;top:807.5px;width:51.5px;height:51.5px;background:#fefefe;box-shadow:0 1px 2px rgba(0,0,0,0.45);"></div><svg style="left:1154.5px;top:807.5px" width="51.5" height="51.5" viewBox="0 0 51.5 51.5"><path d="M20 8 L23 2 L28 4 L33 0 L37 4 L43 4 L42 9 L46 13 L42 16 L42 21 L38 20 L36 12 L28 10 L22 12 Z" fill="#5a3018"/><path d="M23 11 L36 12 L38 24 L34 28 L22 27 L20 22 L22 17 Z" fill="#f8d0a4" stroke="#2a1509" stroke-width="0.8"/><circle cx="26" cy="16" r="1.8" fill="#fff" stroke="#222" stroke-width="0.5"/><circle cx="31" cy="17" r="1.8" fill="#fff" stroke="#222" stroke-width="0.5"/><path d="M24 28 L38 26 L42 34 L40 44 L34 40 L30 46 L26 40 L23 42 Z" fill="#6a4a30" stroke="#2a1509" stroke-width="0.8"/><circle cx="30" cy="32" r="1" fill="#c33"/><circle cx="35" cy="36" r="1" fill="#c33"/><circle cx="28" cy="38" r="1" fill="#c33"/><path d="M25 30 L18 38 L14 42 M40 30 L44 38 L43 44 M30 44 L29 50 L25 51 M36 42 L37 49 L41 50" stroke="#f8d0a4" stroke-width="3" fill="none" stroke-linecap="round"/><path d="M3 28 L8 26 L18 42 L15 45 Z" fill="#5a4a2a" stroke="#2a1509" stroke-width="0.8"/><circle cx="6" cy="29" r="3.4" fill="#5a4a2a" stroke="#2a1509" stroke-width="0.8"/></svg><div style="left:1222.5px;top:807.5px;width:51.5px;height:51.5px;background:#fefefe;box-shadow:0 1px 2px rgba(0,0,0,0.45);"></div><svg style="left:1222.5px;top:807.5px" width="51.5" height="51.5" viewBox="0 0 51.5 51.5"><path d="M5.5 4.4 Q12 0.6 19.7 0.6 L34 1.2 Q42 6 50.4 17.5 L51 39.5 L6.4 51 Q0.4 44 0.8 38 Q1 30 4 22 Q0.4 19 1.5 13 Q2.4 7.6 5.5 4.4 Z" fill="#f8d0a4"/><path d="M50.2 37 L49.8 17.8 Q42 7 33.8 2.2 L19.7 1.8 Q12 1.6 6.4 5.2 Q2.8 9 2.4 15 Q2 19.6 5.4 22 Q2.2 30 2 38 Q1.8 44 6.8 50" fill="none" stroke="#1e0f08" stroke-width="2.6" stroke-linejoin="round"/></svg><svg style="left:1289.9px;top:807px" width="52" height="52" viewBox="0 0 52 52"><path d="M6 17.6 H19 M4.6 24.8 H16 M5 31.6 H13.6" stroke="#5a5957" stroke-width="2.6" stroke-linecap="round"/><path d="M31 10 L46.4 37 H15.2 Z" fill="#19888c" stroke="#19888c" stroke-width="3" stroke-linejoin="round"/></svg><div style="left:1356.5px;top:819.6px;width:56px;height:29px;background:#fefefe;box-shadow:0 1px 2px rgba(0,0,0,0.45);"></div><svg style="left:1356.5px;top:819.6px" width="56" height="29" viewBox="0 0 56 29"><path d="M8 9 Q10 22 26 24 Q46 24 52 4 Q34 12 20 13 Q12 13 8 9 Z" fill="#f8d0a4"/><path d="M8 9 Q10 22 26 24 Q46 24 52 4 L50 4 Q44 20 26 21 Q14 20 11 11 Q16 14 22 14 L22 12 Q12 13 8 9 Z" fill="#1e0f08"/></svg><span class="t" style="left:1012.89px;top:862.1px;width:200px;text-align:center;font-size:10px;letter-spacing:0.57px;color:#111">forearm</span><span class="t" style="left:1080.62px;top:862.1px;width:200px;text-align:center;font-size:10px;letter-spacing:0.63px;color:#111">guide</span><span class="t" style="left:1148.36px;top:862.1px;width:200px;text-align:center;font-size:10px;letter-spacing:0.52px;color:#111">head</span><span class="t" style="left:1215.88px;top:862.1px;width:200px;text-align:center;font-size:10px;letter-spacing:-0.04px;color:#111">Idle</span><span class="t" style="left:1283.76px;top:862.1px;width:200px;text-align:center;font-size:10px;letter-spacing:0.12px;color:#111">jaw_one</span><div style="left:1084.5px;top:903.5px;width:56px;height:28.5px;background:#fefefe;box-shadow:0 1px 2px rgba(0,0,0,0.45);"></div><svg style="left:1084.5px;top:903.5px" width="56" height="28.5" viewBox="0 0 56 28.5"><path d="M3 10 Q4 5 10 7 Q22 9 32 8 L38 12 Q48 10 52 6 Q54 16 50 22 Q30 28 12 26 Q6 22 8 16 Q2 16 3 10 Z" fill="#f8d0a4"/><path d="M3 10 Q4 5 10 7 Q22 9 32 8 L38 13 L36 14 L31 10 Q20 11 10 9 Q5 8 5 11 Q5 14 9 15 Q7 22 13 24 Q30 26 49 20 Q52 14 51 8 L52 6 Q54 16 50 22 Q30 28 12 26 Q6 22 8 16 Q2 16 3 10 Z" fill="#1e0f08"/></svg><div style="left:1167.6px;top:892px;width:25.5px;height:51.5px;background:#fefefe;box-shadow:0 1px 2px rgba(0,0,0,0.45);"></div><svg style="left:1167.6px;top:892px" width="25.5" height="51.5" viewBox="0 0 25.5 51.5"><path d="M4 4 Q12 0 21 3 Q24 24 23 48 L4 50 Q10 28 8 14 Q2 10 4 4 Z" fill="#f8d0a4"/><path d="M4 4 Q12 0 21 3 L21 6 Q12 3 7 6 Q6 9 10 12 Q13 28 7 50 L4 50 Q10 28 8 14 Q2 10 4 4 Z M20 8 Q24 24 23 48 L20 48 Q21 26 18 9 Z" fill="#1e0f08"/></svg><div style="left:1235.9px;top:892px;width:25.2px;height:51.5px;background:#fefefe;box-shadow:0 1px 2px rgba(0,0,0,0.45);"></div><svg style="left:1235.9px;top:892px" width="25.2" height="51.5" viewBox="0 0 25.2 51.5"><path d="M2 6 L22 0 Q18 24 25 46 L10 51 Q8 44 5 40 Q8 36 3 30 Q6 26 2 18 Z" fill="#e0ae86"/><path d="M20 1 L23 0 Q19 24 25 46 L22 47 Q16 24 20 1 Z M2 18 Q6 26 3 30 Q8 36 5 40 Q8 44 10 51 L13 50 Q11 44 8 40 Q11 35 6 30 Q9 25 5 18 Z" fill="#1e0f08"/></svg><div style="left:1303.6px;top:892px;width:25.4px;height:51.5px;background:#fefefe;box-shadow:0 1px 2px rgba(0,0,0,0.45);"></div><div style="left:1371px;top:892px;width:25.2px;height:51.5px;background:#fefefe;box-shadow:0 1px 2px rgba(0,0,0,0.45);"></div><svg style="left:1371px;top:892px" width="25.2" height="51.5" viewBox="0 0 25.2 51.5"><path d="M10 4 Q16 14 15 30 Q6 28 3 36 Q3 46 12 46 Q20 44 19 34 L17 6 Z" fill="#f8d0a4"/><path d="M10 4 L13 3 Q18 14 17 30 L19 34 Q20 46 12 47 Q2 47 2 37 Q4 28 14 30 Q15 16 10 4 Z M13 33 Q6 32 5 38 Q6 44 12 44 Q17 42 16 35 Z" fill="#1e0f08" fill-rule="evenodd"/></svg><span class="t" style="left:1012.84px;top:946.1px;width:200px;text-align:center;font-size:10px;letter-spacing:0.48px;color:#111">jaw_two</span><span class="t" style="left:1080.42px;top:946.1px;width:200px;text-align:center;font-size:10px;letter-spacing:0.25px;color:#111">lower_leg</span><span class="t" style="left:1148.35px;top:946.1px;width:200px;text-align:center;font-size:10px;letter-spacing:0.49px;color:#111">neck</span><span class="t" style="left:1215.96px;top:946.1px;width:200px;text-align:center;font-size:10px;letter-spacing:0.12px;color:#111">no_weap...</span><span class="t" style="left:1283.69px;top:946.1px;width:200px;text-align:center;font-size:10px;letter-spacing:-0.02px;color:#111">nose_1</span></div></div>
<div style="left:1070px;top:639.5px;width:371px;height:19.5px;background:#cdccca;"></div>
<span class="t" style="top:641px;left:1074.6px;letter-spacing:0.06px;">Assets</span>
<span class="t" style="top:641px;left:1129.2px;letter-spacing:0.24px;">Sprites</span>
<span class="t" style="top:641px;left:1186.6px;letter-spacing:0.3px;">Characters</span>
<span class="t" style="top:641px;left:1266.9px;font-weight:bold;letter-spacing:-0.07px;">Anatol</span>
<svg style="left:1116px;top:644px;" width="8" height="10" viewBox="0 0 8 10"><path d="M1.6 1 L6.2 5 L1.6 9" fill="none" stroke="#6a6967" stroke-width="1.1"/></svg>
<svg style="left:1173px;top:644px;" width="8" height="10" viewBox="0 0 8 10"><path d="M1.6 1 L6.2 5 L1.6 9" fill="none" stroke="#6a6967" stroke-width="1.1"/></svg>
<svg style="left:1253.5px;top:644px;" width="8" height="10" viewBox="0 0 8 10"><path d="M1.6 1 L6.2 5 L1.6 9" fill="none" stroke="#6a6967" stroke-width="1.1"/></svg>
<div style="left:1070px;top:970px;width:371px;height:20px;background:#cdccca;"></div>
<div style="left:1370px;top:979px;width:55px;height:1.4px;background:#7b7a78;"></div>
<div style="left:1391.5px;top:974px;width:11px;height:11px;background:#5a5957;border-radius:50%;"></div>
<div style="left:0px;top:990px;width:1918px;height:19px;background:#8a8987;"></div>
<span class="t" style="top:993px;left:1740.4px;letter-spacing:0.2px;">Auto Generate Lighting On</span>
</div></body></html>
